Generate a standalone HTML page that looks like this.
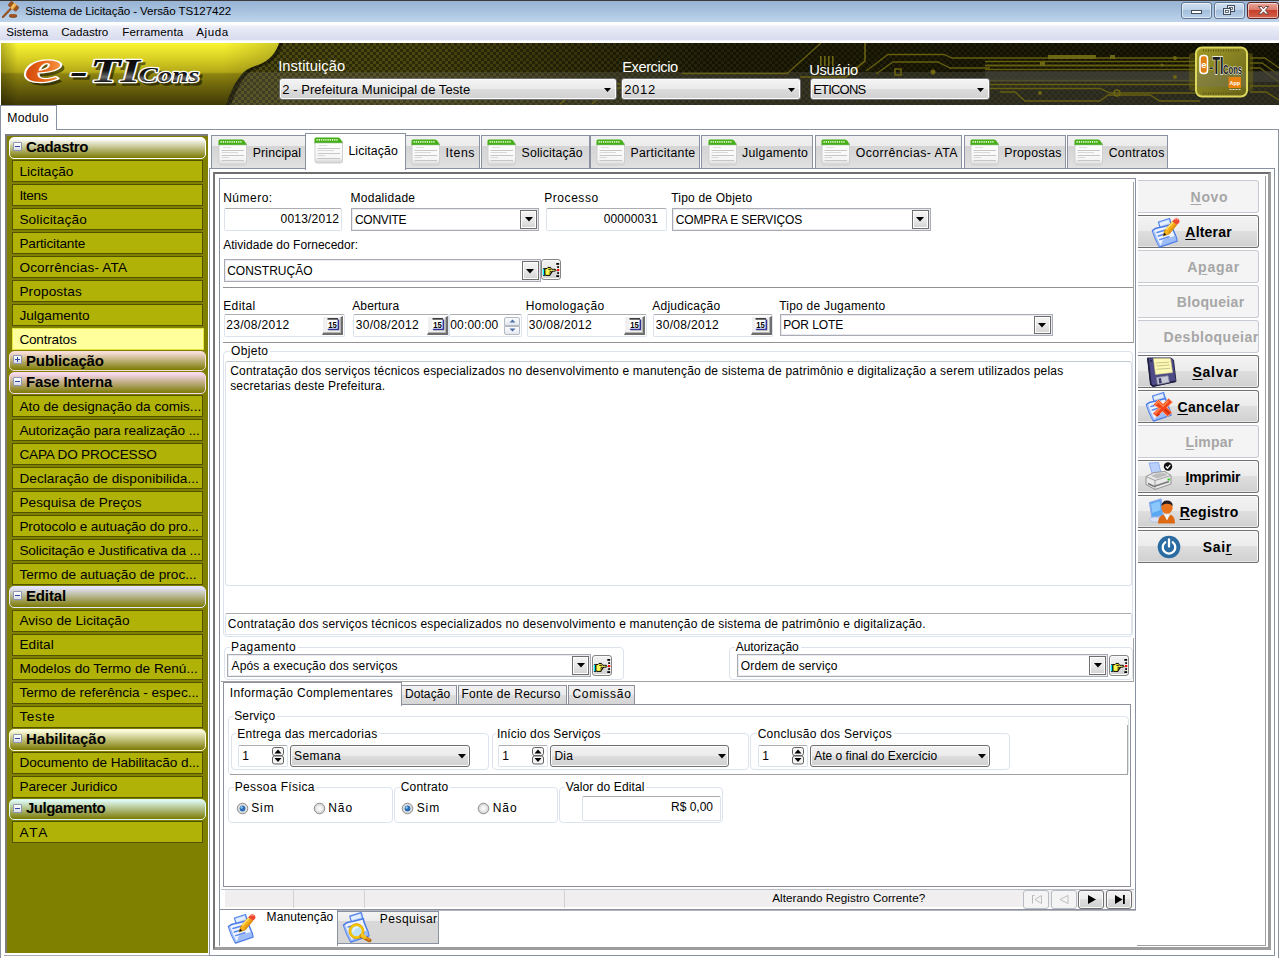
<!DOCTYPE html>
<html lang="pt-BR"><head><meta charset="utf-8"><title>Sistema de Licitação - Versão TS127422</title>
<style>
html,body{margin:0;padding:0;background:#fff;}
body{width:1279px;height:958px;position:relative;overflow:hidden;font-family:"Liberation Sans",sans-serif;}
u{text-decoration:underline;text-underline-offset:1.5px;text-decoration-thickness:1px;}
</style></head><body>
<div style="position:absolute;left:0px;top:0px;width:1279px;height:22px;background:linear-gradient(#98b3d4 0,#a6c0de 45%,#b4cce6 75%,#bdd3ea 100%);border-top:1px solid #3a3a3a;box-sizing:border-box;"></div>
<svg style="position:absolute;left:0px;top:0px" width="22" height="22" viewBox="0 0 22 22">
<path d="M2.900 17 L11.200 8.300" stroke="#8a4a1c" stroke-width="2.100" stroke-linecap="round"/>
<path d="M3.200 16.300 L10.800 8.400" stroke="#b06a30" stroke-width=".7" stroke-linecap="round"/>
<g transform="translate(13.500,6.300) rotate(39)"><rect x="-5.300" y="-2.900" width="10.600" height="5.800" rx="1.400" fill="#874618"/><rect x="-5" y="-2.600" width="2.600" height="5.200" rx="1" fill="#9a5522"/><rect x="2.400" y="-2.600" width="2.600" height="5.200" rx="1" fill="#9a5522"/><rect x="-1.900" y="-3.100" width="3.800" height="6.200" fill="#e9a13c"/><rect x="-1.200" y="-3.100" width="1.600" height="6.200" fill="#f8c56a"/></g>
<ellipse cx="13.100" cy="16" rx="4.100" ry="1.800" fill="#7c3f14"/>
<ellipse cx="13.100" cy="15.400" rx="3.800" ry="1.300" fill="#a25722"/>
</svg>
<span style="position:absolute;left:25.20px;top:4px;line-height:14px;font:normal normal 11.6px/14px 'Liberation Sans',sans-serif;color:#000;white-space:nowrap;letter-spacing:-0.105px;">Sistema de Licitação - Versão TS127422</span>
<div style="position:absolute;left:1181px;top:2px;width:31px;height:17px;background:linear-gradient(#cfe0f2 0,#bcd1e8 45%,#a3bedb 50%,#b9d0e8 100%);border:1px solid #5f7693;border-radius:3px;box-sizing:border-box;box-shadow:inset 0 0 0 1px rgba(255,255,255,.55);"></div>
<div style="position:absolute;left:1214px;top:2px;width:31px;height:17px;background:linear-gradient(#cfe0f2 0,#bcd1e8 45%,#a3bedb 50%,#b9d0e8 100%);border:1px solid #5f7693;border-radius:3px;box-sizing:border-box;box-shadow:inset 0 0 0 1px rgba(255,255,255,.55);"></div>
<div style="position:absolute;left:1247px;top:2px;width:32px;height:17px;background:linear-gradient(#e8a89c 0,#d9796a 45%,#c6402c 50%,#d2604a 100%);border:1px solid #5c2420;border-radius:3px;box-sizing:border-box;box-shadow:inset 0 0 0 1px rgba(255,255,255,.55);"></div>
<svg style="position:absolute;left:1181px;top:2px" width="98" height="17" viewBox="0 0 98 17">
<rect x="10.5" y="8.5" width="10" height="3" fill="#fff" stroke="#444c5a" stroke-width="1"/>
<rect x="46.5" y="3.5" width="7" height="6" fill="#e8eef6" stroke="#444c5a"/><rect x="48.5" y="5.5" width="3" height="2" fill="#fff" stroke="#444c5a" stroke-width=".8"/>
<rect x="42.5" y="6.5" width="7" height="6" fill="#e8eef6" stroke="#444c5a"/><rect x="44.5" y="8.5" width="3" height="2" fill="#fff" stroke="#444c5a" stroke-width=".8"/>
<path d="M77.5 4.5 L80.5 4.5 L82.5 6.8 L84.5 4.5 L87.5 4.5 L84.3 8.3 L87.5 12 L84.5 12 L82.5 9.8 L80.5 12 L77.5 12 L80.7 8.3 Z" fill="#fff" stroke="#5a3a3a" stroke-width=".9"/>
</svg>
<div style="position:absolute;left:0px;top:22px;width:1279px;height:21px;background:linear-gradient(#fff 0,#fff 10%,#eceef8 22%,#e3e6f4 45%,#d8dcee 84%,#fff 90%,#fff 100%);"></div>
<span style="position:absolute;left:6.20px;top:25px;line-height:14px;font:normal normal 11.6px/14px 'Liberation Sans',sans-serif;color:#000;white-space:nowrap;letter-spacing:0.018px;">Sistema</span>
<span style="position:absolute;left:61.20px;top:25px;line-height:14px;font:normal normal 11.6px/14px 'Liberation Sans',sans-serif;color:#000;white-space:nowrap;">Cadastro</span>
<span style="position:absolute;left:122.20px;top:25px;line-height:14px;font:normal normal 11.6px/14px 'Liberation Sans',sans-serif;color:#000;white-space:nowrap;letter-spacing:0.120px;">Ferramenta</span>
<span style="position:absolute;left:196.20px;top:25px;line-height:14px;font:normal normal 11.6px/14px 'Liberation Sans',sans-serif;color:#000;white-space:nowrap;letter-spacing:0.586px;">Ajuda</span>
<svg style="position:absolute;left:1px;top:43px" width="1278" height="62" viewBox="1 43 1278 62">
<defs>
<pattern id="chk" x="1" y="43" width="6" height="6" patternUnits="userSpaceOnUse"><rect width="6" height="6" fill="#2f2c08"/><rect width="3" height="3" fill="#4e4a12"/><rect x="3" y="3" width="3" height="3" fill="#4e4a12"/></pattern>
<linearGradient id="dk" x1="0" x2="1" y1="0" y2="0"><stop offset="0" stop-color="#000" stop-opacity="0"/><stop offset=".33" stop-color="#000" stop-opacity=".05"/><stop offset=".55" stop-color="#000" stop-opacity=".55"/><stop offset="1" stop-color="#000" stop-opacity=".68"/></linearGradient>
<linearGradient id="yl" x1="0" x2="0" y1="0" y2="1"><stop offset="0" stop-color="#fbf532"/><stop offset=".25" stop-color="#d9d024"/><stop offset=".47" stop-color="#b3a918"/><stop offset=".5" stop-color="#8e8410"/><stop offset=".75" stop-color="#655d0a"/><stop offset="1" stop-color="#3f3906"/></linearGradient>
<linearGradient id="ylx" x1="0" x2="1" y1="0" y2="0"><stop offset="0" stop-color="#000" stop-opacity=".25"/><stop offset=".06" stop-color="#000" stop-opacity="0"/><stop offset=".8" stop-color="#000" stop-opacity="0"/><stop offset="1" stop-color="#000" stop-opacity=".18"/></linearGradient>
<linearGradient id="chip" x1="0" x2="1" y1="0" y2="1"><stop offset="0" stop-color="#a09a28"/><stop offset="1" stop-color="#68641a"/></linearGradient>
</defs>
<rect x="1" y="43" width="1278" height="62" fill="url(#chk)"/>
<rect x="1" y="43" width="1278" height="62" fill="url(#dk)"/>
<rect x="1" y="72" width="1278" height="33" fill="#8a8a8a" opacity=".2"/>
<g stroke="#6d6612" fill="none" stroke-width="1.3" opacity=".9"><path d="M560 104 L585 84 L720 84"/><path d="M592 104 L612 88 L760 88"/><path d="M682 73.5 L787 73.5 L821 43"/><path d="M800 77 L846 77 L865 61 L865 43" stroke-width="1.7"/><path d="M866 71 L888 54.5 L944 54.5 L952 58 L1190 58"/><path d="M876 74 L893 62 L938 62 L950 68 L990 68"/><path d="M985 61.5 L1195 61.5"/><path d="M985 65.5 L1195 65.5" stroke-width="1.8"/><path d="M985 69.5 L1195 69.5"/><path d="M985 80.5 L1195 80.5"/><path d="M985 84.5 L1195 84.5" stroke-width="1.6"/><path d="M985 88.5 L1100 88.5 L1110 93 L1195 93"/><path d="M1000 92 L1015 92 L1025 101 L1100 101 L1108 95 L1150 95 L1160 101 L1200 101"/><path d="M1250 58 L1265 58 L1279 68"/><path d="M1250 63 L1262 63 L1279 75"/><path d="M1250 68 L1260 68 L1279 82"/><path d="M1250 86 L1279 86"/><path d="M1250 92 L1266 92 L1279 100"/></g>
<rect x="985" y="71" width="294" height="11" fill="#45453c" opacity=".6"/>
<g fill="#6d6612"><rect x="1048" y="55" width="48" height="4"/><rect x="1110" y="55" width="5" height="4"/><rect x="1040" y="62" width="5" height="4"/><rect x="820" y="56" width="1.600" height="10"/><rect x="824" y="56" width="1.600" height="10"/><rect x="828" y="56" width="1.600" height="10"/><rect x="832" y="56" width="1.600" height="10"/><circle cx="1040" cy="93" r="2"/><circle cx="1175" cy="58" r="2"/><circle cx="1162" cy="65" r="1.6"/><circle cx="1175" cy="77" r="2"/><circle cx="933" cy="72" r="2.5"/><rect x="895" y="69" width="6" height="6" fill="none" stroke="#6d6612" stroke-width="1.5"/></g>
<circle cx="1117" cy="93" r="3" fill="none" stroke="#6d6612" stroke-width="1.4"/>
<path d="M1 43 L283 43 C281 51 276 58 270 62 C262 67 255 68 249 73 C241 80 236 91 231 105 L1 105 Z" fill="#000" opacity=".45"/>
<path d="M1 43 L279 43 C277 50 272 57 266 61 C259 66 251 66 245 71 C237 78 231 90 226 105 L1 105 Z" fill="url(#yl)"/>
<path d="M1 43 L279 43 C277 50 272 57 266 61 C259 66 251 66 245 71 C237 78 231 90 226 105 L1 105 Z" fill="url(#ylx)"/>
<rect x="1189" y="53" width="64" height="38" rx="3" fill="#6b650f" opacity=".5"/>
<rect x="1196" y="47.5" width="51" height="49" rx="6" fill="url(#chip)" stroke="#dcd85c" stroke-width="2"/>
<rect x="1197" y="72" width="49" height="15" fill="#77776a" opacity=".35"/>
<path d="M1203 50.500 H1240 M1203 93.500 H1240" stroke="#5d5812" stroke-width="2" stroke-dasharray="1 1.500"/>
<rect x="1200" y="55.500" width="7.500" height="18" rx="3" fill="#e07f12" stroke="#fff" stroke-width="1.500"/>
<text x="1201.200" y="68" font-family="Liberation Sans,sans-serif" font-weight="bold" font-size="9.500" fill="#fff">e</text>
<text x="1209" y="72" font-family="Liberation Sans,sans-serif" font-weight="bold" font-size="13" fill="#222" stroke="#fff" stroke-width=".6" paint-order="stroke">-</text>
<text x="1212.500" y="73.500" font-family="Liberation Sans,sans-serif" font-weight="bold" font-size="23" fill="#1d1d1d" stroke="#fff" stroke-width="1.300" paint-order="stroke" textLength="11" lengthAdjust="spacingAndGlyphs">TI</text>
<text x="1223" y="73.500" font-family="Liberation Sans,sans-serif" font-weight="bold" font-size="13" fill="#1d1d1d" stroke="#fff" stroke-width="1" paint-order="stroke" textLength="19" lengthAdjust="spacingAndGlyphs">Cons</text>
<rect x="1228.500" y="77" width="12.500" height="11" fill="#e8820e"/>
<text x="1229.500" y="85" font-family="Liberation Sans,sans-serif" font-weight="bold" font-size="5.500" fill="#fff">App</text>
<path d="M1229.500 89.500 H1241" stroke="#fff" stroke-width=".8" stroke-dasharray="2 1"/>
<defs><linearGradient id="lgm" x1="0" x2="0" y1="0" y2="1"><stop offset="0" stop-color="#000"/><stop offset=".5" stop-color="#161616"/><stop offset=".68" stop-color="#6e6e6e"/><stop offset=".8" stop-color="#1c1c1c"/><stop offset="1" stop-color="#000"/></linearGradient>
<linearGradient id="lge" x1="0" x2="1" y1="0" y2="0"><stop offset="0" stop-color="#cf4408"/><stop offset=".55" stop-color="#ea6a1c"/><stop offset="1" stop-color="#f79a48"/></linearGradient></defs>
<g font-family="Liberation Serif,serif" font-style="italic" font-weight="bold">
<g transform="translate(3,3)" fill="#000" opacity=".5" stroke="#000" stroke-width="1.500">
<text x="24" y="82" font-size="47" textLength="38" lengthAdjust="spacingAndGlyphs">e</text>
<text x="70" y="83" font-size="34" textLength="18" lengthAdjust="spacingAndGlyphs">-</text>
<text x="90" y="82" font-size="34" textLength="50" lengthAdjust="spacingAndGlyphs">TI</text>
<text x="138.500" y="81.500" font-size="21.500" textLength="61" lengthAdjust="spacingAndGlyphs">Cons</text></g>
<g stroke="#fff" stroke-width="2.400" stroke-linejoin="round" fill="#fff">
<text x="24" y="82" font-size="47" textLength="38" lengthAdjust="spacingAndGlyphs">e</text>
<text x="70" y="83" font-size="34" textLength="18" lengthAdjust="spacingAndGlyphs">-</text>
<text x="90" y="82" font-size="34" textLength="50" lengthAdjust="spacingAndGlyphs">TI</text>
<text x="138.500" y="81.500" font-size="21.500" textLength="61" lengthAdjust="spacingAndGlyphs">Cons</text></g>
<text x="24" y="82" font-size="47" fill="url(#lge)" textLength="38" lengthAdjust="spacingAndGlyphs">e</text>
<text x="70" y="83" font-size="34" fill="#111" textLength="18" lengthAdjust="spacingAndGlyphs">-</text>
<text x="90" y="82" font-size="34" fill="url(#lgm)" textLength="50" lengthAdjust="spacingAndGlyphs">TI</text>
<text x="138.500" y="81.500" font-size="21.500" fill="url(#lgm)" textLength="61" lengthAdjust="spacingAndGlyphs">Cons</text>
</g>
</svg>
<span style="position:absolute;left:278.20px;top:57px;line-height:18px;font:normal normal 14.7px/18px 'Liberation Sans',sans-serif;color:#fff;white-space:nowrap;letter-spacing:0.086px;">Instituição</span>
<span style="position:absolute;left:622.20px;top:58px;line-height:18px;font:normal normal 14.7px/18px 'Liberation Sans',sans-serif;color:#fff;white-space:nowrap;letter-spacing:-0.449px;">Exercicio</span>
<span style="position:absolute;left:809.20px;top:61px;line-height:18px;font:normal normal 14.7px/18px 'Liberation Sans',sans-serif;color:#fff;white-space:nowrap;letter-spacing:-0.271px;">Usuário</span>
<div style="position:absolute;left:279px;top:78px;width:338px;height:22px;background:linear-gradient(#f4f4f4 0,#eaeaea 48%,#dcdcdc 52%,#d0d0d0 100%);border:1px solid #707070;border-radius:3px;box-sizing:border-box;box-shadow:inset 0 0 0 1px #fcfcfc;"></div><span style="position:absolute;left:282.20px;top:81px;line-height:17px;font:normal normal 13px/17px 'Liberation Sans',sans-serif;color:#000;white-space:nowrap;letter-spacing:0.056px;">2 - Prefeitura Municipal de Teste</span><svg style="position:absolute;left:604px;top:88px" width="8" height="5"><path d="M0 0 L7 0 L3.5 4 Z" fill="#000"/></svg>
<div style="position:absolute;left:621px;top:78px;width:180px;height:22px;background:linear-gradient(#f4f4f4 0,#eaeaea 48%,#dcdcdc 52%,#d0d0d0 100%);border:1px solid #707070;border-radius:3px;box-sizing:border-box;box-shadow:inset 0 0 0 1px #fcfcfc;"></div><span style="position:absolute;left:624.20px;top:81px;line-height:17px;font:normal normal 13px/17px 'Liberation Sans',sans-serif;color:#000;white-space:nowrap;letter-spacing:0.693px;">2012</span><svg style="position:absolute;left:788px;top:88px" width="8" height="5"><path d="M0 0 L7 0 L3.5 4 Z" fill="#000"/></svg>
<div style="position:absolute;left:810px;top:78px;width:180px;height:22px;background:linear-gradient(#f4f4f4 0,#eaeaea 48%,#dcdcdc 52%,#d0d0d0 100%);border:1px solid #707070;border-radius:3px;box-sizing:border-box;box-shadow:inset 0 0 0 1px #fcfcfc;"></div><span style="position:absolute;left:813.20px;top:81px;line-height:17px;font:normal normal 13px/17px 'Liberation Sans',sans-serif;color:#000;white-space:nowrap;letter-spacing:-0.799px;">ETICONS</span><svg style="position:absolute;left:977px;top:88px" width="8" height="5"><path d="M0 0 L7 0 L3.5 4 Z" fill="#000"/></svg>
<div style="position:absolute;left:0px;top:129px;width:1278.5px;height:840px;border:1px solid #8a91a0;box-sizing:border-box;background:#fff;"></div>
<div style="position:absolute;left:4px;top:955px;width:1205px;height:1px;background:#a9a9ae;"></div>
<div style="position:absolute;left:0px;top:105px;width:57px;height:25px;border:1px solid #8a91a0;border-bottom:none;box-sizing:border-box;background:#fff;"></div>
<span style="position:absolute;left:7.20px;top:110px;line-height:16px;font:normal normal 12.3px/16px 'Liberation Sans',sans-serif;color:#000;white-space:nowrap;letter-spacing:0.231px;">Modulo</span>
<div style="position:absolute;left:5px;top:134px;width:203px;height:819px;background:#808000;border:2px solid #7d7d7d;border-right:none;border-bottom:none;box-sizing:border-box;"></div>
<div style="position:absolute;left:9px;top:137px;width:197px;height:22px;box-sizing:border-box;border:1px solid #fff;border-radius:5px;background:linear-gradient(#fff 0,#fff 4%,#7c7a02 100%);"></div><div style="position:absolute;left:13px;top:142px;width:9px;height:9px;box-sizing:border-box;border:1px solid #8c97b4;border-radius:1px;background:linear-gradient(#fff,#dcdce4);"></div><div style="position:absolute;left:15px;top:146px;width:5px;height:1px;background:#3048a8;"></div><span style="position:absolute;left:26.00px;top:137px;line-height:19px;font:normal bold 15px/19px 'Liberation Sans',sans-serif;color:#000;white-space:nowrap;letter-spacing:-0.362px;">Cadastro</span>
<div style="position:absolute;left:12px;top:160px;width:191px;height:22px;box-sizing:border-box;background:#b0b208;border:1px solid #525200;"></div><span style="position:absolute;left:19.40px;top:163px;line-height:17px;font:normal normal 13.6px/17px 'Liberation Sans',sans-serif;color:#000;white-space:nowrap;letter-spacing:0.043px;">Licitação</span>
<div style="position:absolute;left:12px;top:184px;width:191px;height:22px;box-sizing:border-box;background:#b0b208;border:1px solid #525200;"></div><span style="position:absolute;left:19.40px;top:187px;line-height:17px;font:normal normal 13.6px/17px 'Liberation Sans',sans-serif;color:#000;white-space:nowrap;letter-spacing:-0.321px;">Itens</span>
<div style="position:absolute;left:12px;top:208px;width:191px;height:22px;box-sizing:border-box;background:#b0b208;border:1px solid #525200;"></div><span style="position:absolute;left:19.40px;top:211px;line-height:17px;font:normal normal 13.6px/17px 'Liberation Sans',sans-serif;color:#000;white-space:nowrap;letter-spacing:0.165px;">Solicitação</span>
<div style="position:absolute;left:12px;top:232px;width:191px;height:22px;box-sizing:border-box;background:#b0b208;border:1px solid #525200;"></div><span style="position:absolute;left:19.40px;top:235px;line-height:17px;font:normal normal 13.6px/17px 'Liberation Sans',sans-serif;color:#000;white-space:nowrap;letter-spacing:-0.183px;">Particitante</span>
<div style="position:absolute;left:12px;top:256px;width:191px;height:22px;box-sizing:border-box;background:#b0b208;border:1px solid #525200;"></div><span style="position:absolute;left:19.40px;top:259px;line-height:17px;font:normal normal 13.6px/17px 'Liberation Sans',sans-serif;color:#000;white-space:nowrap;letter-spacing:0.162px;">Ocorrências- ATA</span>
<div style="position:absolute;left:12px;top:280px;width:191px;height:22px;box-sizing:border-box;background:#b0b208;border:1px solid #525200;"></div><span style="position:absolute;left:19.40px;top:283px;line-height:17px;font:normal normal 13.6px/17px 'Liberation Sans',sans-serif;color:#000;white-space:nowrap;letter-spacing:0.135px;">Propostas</span>
<div style="position:absolute;left:12px;top:304px;width:191px;height:22px;box-sizing:border-box;background:#b0b208;border:1px solid #525200;"></div><span style="position:absolute;left:19.40px;top:307px;line-height:17px;font:normal normal 13.6px/17px 'Liberation Sans',sans-serif;color:#000;white-space:nowrap;">Julgamento</span>
<div style="position:absolute;left:12px;top:328px;width:192px;height:22px;box-sizing:border-box;background:#ffff9c;border:1px solid #e6e640;"></div><span style="position:absolute;left:19.40px;top:331px;line-height:17px;font:normal normal 13.6px/17px 'Liberation Sans',sans-serif;color:#000;white-space:nowrap;letter-spacing:-0.205px;">Contratos</span>
<div style="position:absolute;left:9px;top:351px;width:197px;height:20px;box-sizing:border-box;border:1px solid #f6ddd6;border-radius:5px;background:linear-gradient(#f6ddd6 0,#f6ddd6 4%,#7c7a02 100%);"></div><div style="position:absolute;left:13px;top:355px;width:9px;height:9px;box-sizing:border-box;border:1px solid #8c97b4;border-radius:1px;background:linear-gradient(#fff,#dcdce4);"></div><div style="position:absolute;left:15px;top:359px;width:5px;height:1px;background:#3048a8;"></div><div style="position:absolute;left:17px;top:357px;width:1px;height:5px;background:#3048a8;"></div><span style="position:absolute;left:26.00px;top:351px;line-height:19px;font:normal bold 15px/19px 'Liberation Sans',sans-serif;color:#000;white-space:nowrap;letter-spacing:-0.134px;">Publicação</span>
<div style="position:absolute;left:9px;top:372px;width:197px;height:22px;box-sizing:border-box;border:1px solid #f8d8ee;border-radius:5px;background:linear-gradient(#f8d8ee 0,#f8d8ee 4%,#7c7a02 100%);"></div><div style="position:absolute;left:13px;top:377px;width:9px;height:9px;box-sizing:border-box;border:1px solid #8c97b4;border-radius:1px;background:linear-gradient(#fff,#dcdce4);"></div><div style="position:absolute;left:15px;top:381px;width:5px;height:1px;background:#3048a8;"></div><span style="position:absolute;left:26.00px;top:372px;line-height:19px;font:normal bold 15px/19px 'Liberation Sans',sans-serif;color:#000;white-space:nowrap;letter-spacing:-0.189px;">Fase Interna</span>
<div style="position:absolute;left:12px;top:395.2px;width:191px;height:22px;box-sizing:border-box;background:#b0b208;border:1px solid #525200;"></div><span style="position:absolute;left:19.40px;top:398px;line-height:17px;font:normal normal 13.6px/17px 'Liberation Sans',sans-serif;color:#000;white-space:nowrap;letter-spacing:-0.012px;">Ato de designação da comis...</span>
<div style="position:absolute;left:12px;top:419.2px;width:191px;height:22px;box-sizing:border-box;background:#b0b208;border:1px solid #525200;"></div><span style="position:absolute;left:19.40px;top:422px;line-height:17px;font:normal normal 13.6px/17px 'Liberation Sans',sans-serif;color:#000;white-space:nowrap;letter-spacing:-0.107px;">Autorização para realização ...</span>
<div style="position:absolute;left:12px;top:443.2px;width:191px;height:22px;box-sizing:border-box;background:#b0b208;border:1px solid #525200;"></div><span style="position:absolute;left:19.40px;top:446px;line-height:17px;font:normal normal 13.6px/17px 'Liberation Sans',sans-serif;color:#000;white-space:nowrap;letter-spacing:-0.184px;">CAPA DO PROCESSO</span>
<div style="position:absolute;left:12px;top:467.2px;width:191px;height:22px;box-sizing:border-box;background:#b0b208;border:1px solid #525200;"></div><span style="position:absolute;left:19.40px;top:470px;line-height:17px;font:normal normal 13.6px/17px 'Liberation Sans',sans-serif;color:#000;white-space:nowrap;letter-spacing:0.066px;">Declaração de disponibilida...</span>
<div style="position:absolute;left:12px;top:491.2px;width:191px;height:22px;box-sizing:border-box;background:#b0b208;border:1px solid #525200;"></div><span style="position:absolute;left:19.40px;top:494px;line-height:17px;font:normal normal 13.6px/17px 'Liberation Sans',sans-serif;color:#000;white-space:nowrap;letter-spacing:0.070px;">Pesquisa de Preços</span>
<div style="position:absolute;left:12px;top:515.2px;width:191px;height:22px;box-sizing:border-box;background:#b0b208;border:1px solid #525200;"></div><span style="position:absolute;left:19.40px;top:518px;line-height:17px;font:normal normal 13.6px/17px 'Liberation Sans',sans-serif;color:#000;white-space:nowrap;letter-spacing:-0.091px;">Protocolo e autuação do pro...</span>
<div style="position:absolute;left:12px;top:539.2px;width:191px;height:22px;box-sizing:border-box;background:#b0b208;border:1px solid #525200;"></div><span style="position:absolute;left:19.40px;top:542px;line-height:17px;font:normal normal 13.6px/17px 'Liberation Sans',sans-serif;color:#000;white-space:nowrap;letter-spacing:-0.116px;">Solicitação e Justificativa da ...</span>
<div style="position:absolute;left:12px;top:563.2px;width:191px;height:22px;box-sizing:border-box;background:#b0b208;border:1px solid #525200;"></div><span style="position:absolute;left:19.40px;top:566px;line-height:17px;font:normal normal 13.6px/17px 'Liberation Sans',sans-serif;color:#000;white-space:nowrap;letter-spacing:0.014px;">Termo de autuação de proc...</span>
<div style="position:absolute;left:9px;top:586px;width:197px;height:22px;box-sizing:border-box;border:1px solid #e4e4fa;border-radius:5px;background:linear-gradient(#e4e4fa 0,#e4e4fa 4%,#7c7a02 100%);"></div><div style="position:absolute;left:13px;top:591px;width:9px;height:9px;box-sizing:border-box;border:1px solid #8c97b4;border-radius:1px;background:linear-gradient(#fff,#dcdce4);"></div><div style="position:absolute;left:15px;top:595px;width:5px;height:1px;background:#3048a8;"></div><span style="position:absolute;left:26.00px;top:586px;line-height:19px;font:normal bold 15px/19px 'Liberation Sans',sans-serif;color:#000;white-space:nowrap;letter-spacing:-0.149px;">Edital</span>
<div style="position:absolute;left:12px;top:609.7px;width:191px;height:22px;box-sizing:border-box;background:#b0b208;border:1px solid #525200;"></div><span style="position:absolute;left:19.40px;top:612px;line-height:17px;font:normal normal 13.6px/17px 'Liberation Sans',sans-serif;color:#000;white-space:nowrap;letter-spacing:0.045px;">Aviso de Licitação</span>
<div style="position:absolute;left:12px;top:633.7px;width:191px;height:22px;box-sizing:border-box;background:#b0b208;border:1px solid #525200;"></div><span style="position:absolute;left:19.40px;top:636px;line-height:17px;font:normal normal 13.6px/17px 'Liberation Sans',sans-serif;color:#000;white-space:nowrap;letter-spacing:0.057px;">Edital</span>
<div style="position:absolute;left:12px;top:657.7px;width:191px;height:22px;box-sizing:border-box;background:#b0b208;border:1px solid #525200;"></div><span style="position:absolute;left:19.40px;top:660px;line-height:17px;font:normal normal 13.6px/17px 'Liberation Sans',sans-serif;color:#000;white-space:nowrap;letter-spacing:0.012px;">Modelos do Termo de Renú...</span>
<div style="position:absolute;left:12px;top:681.7px;width:191px;height:22px;box-sizing:border-box;background:#b0b208;border:1px solid #525200;"></div><span style="position:absolute;left:19.40px;top:684px;line-height:17px;font:normal normal 13.6px/17px 'Liberation Sans',sans-serif;color:#000;white-space:nowrap;letter-spacing:-0.037px;">Termo de referência - espec...</span>
<div style="position:absolute;left:12px;top:705.7px;width:191px;height:22px;box-sizing:border-box;background:#b0b208;border:1px solid #525200;"></div><span style="position:absolute;left:19.40px;top:708px;line-height:17px;font:normal normal 13.6px/17px 'Liberation Sans',sans-serif;color:#000;white-space:nowrap;letter-spacing:0.675px;">Teste</span>
<div style="position:absolute;left:9px;top:729px;width:197px;height:22px;box-sizing:border-box;border:1px solid #fbfbdc;border-radius:5px;background:linear-gradient(#fbfbdc 0,#fbfbdc 4%,#7c7a02 100%);"></div><div style="position:absolute;left:13px;top:734px;width:9px;height:9px;box-sizing:border-box;border:1px solid #8c97b4;border-radius:1px;background:linear-gradient(#fff,#dcdce4);"></div><div style="position:absolute;left:15px;top:738px;width:5px;height:1px;background:#3048a8;"></div><span style="position:absolute;left:26.00px;top:729px;line-height:19px;font:normal bold 15px/19px 'Liberation Sans',sans-serif;color:#000;white-space:nowrap;letter-spacing:-0.023px;">Habilitação</span>
<div style="position:absolute;left:12px;top:751.8px;width:191px;height:22px;box-sizing:border-box;background:#b0b208;border:1px solid #525200;"></div><span style="position:absolute;left:19.40px;top:754px;line-height:17px;font:normal normal 13.6px/17px 'Liberation Sans',sans-serif;color:#000;white-space:nowrap;letter-spacing:-0.068px;">Documento de Habilitacão d...</span>
<div style="position:absolute;left:12px;top:775.8px;width:191px;height:22px;box-sizing:border-box;background:#b0b208;border:1px solid #525200;"></div><span style="position:absolute;left:19.40px;top:778px;line-height:17px;font:normal normal 13.6px/17px 'Liberation Sans',sans-serif;color:#000;white-space:nowrap;letter-spacing:-0.015px;">Parecer Juridico</span>
<div style="position:absolute;left:9px;top:798.5px;width:197px;height:21.5px;box-sizing:border-box;border:1px solid #dcf8f0;border-radius:5px;background:linear-gradient(#dcf8f0 0,#dcf8f0 4%,#7c7a02 100%);"></div><div style="position:absolute;left:13px;top:803.5px;width:9px;height:9px;box-sizing:border-box;border:1px solid #8c97b4;border-radius:1px;background:linear-gradient(#fff,#dcdce4);"></div><div style="position:absolute;left:15px;top:807.5px;width:5px;height:1px;background:#3048a8;"></div><span style="position:absolute;left:26.00px;top:798px;line-height:19px;font:normal bold 15px/19px 'Liberation Sans',sans-serif;color:#000;white-space:nowrap;letter-spacing:-0.499px;">Julgamento</span>
<div style="position:absolute;left:12px;top:821.2px;width:191px;height:22px;box-sizing:border-box;background:#b0b208;border:1px solid #525200;"></div><span style="position:absolute;left:19.40px;top:824px;line-height:17px;font:normal normal 13.6px/17px 'Liberation Sans',sans-serif;color:#000;white-space:nowrap;letter-spacing:1.789px;">ATA</span>
<div style="position:absolute;left:209px;top:168px;width:1065.5px;height:787.5px;border:1px solid #8a91a0;box-sizing:border-box;background:#fff;"></div>
<div style="position:absolute;left:211px;top:135px;width:94.5px;height:33px;box-sizing:border-box;border:1px solid #8a91a0;border-bottom:none;background:linear-gradient(#f1f1f1 0,#ececec 30%,#d5d5d5 32%,#dadada 70%,#e2e2e2 100%);"></div>
<svg style="position:absolute;left:218px;top:138.5px" width="30" height="27" viewBox="0 0 30 27">
<defs><linearGradient id="pg218" x1="0" x2="0" y1="0" y2="1"><stop offset="0" stop-color="#fff"/><stop offset=".75" stop-color="#f6f6f6"/><stop offset="1" stop-color="#d2d2d2"/></linearGradient></defs>
<path d="M1 4 L28.500 4 L28.500 24 Q28.500 26 26.500 26 L3 26 Q1 26 1 24 Z" fill="url(#pg218)" stroke="#cfcfcf" stroke-width="1"/>
<path d="M0.500 2 Q0.500 0.500 2 0.500 L24 0.500 Q25.500 0.500 26.500 2 L28.500 5.500 L0.500 5.500 Z" fill="#44b016"/>
<path d="M2.500 2.800 H24" stroke="#dff6cc" stroke-width="1.800" stroke-dasharray="1.300 .9"/>
<path d="M0.500 5.700 H28.500" stroke="#2f8f0a" stroke-width=".7"/>
<g stroke="#c6c6c6" stroke-width="1"><path d="M5 8.500 H13" stroke="#dedede"/><path d="M3.500 11.500 H26"/><path d="M3.500 13.500 H20" stroke="#d8d8d8"/><path d="M3.500 16.500 H26"/><path d="M3.500 18.500 H11" stroke="#d8d8d8"/><path d="M3.500 21.500 H26"/></g>
</svg>
<span style="position:absolute;left:252.70px;top:145px;line-height:16px;font:normal normal 12.3px/16px 'Liberation Sans',sans-serif;color:#000;white-space:nowrap;letter-spacing:0.154px;">Principal</span>
<div style="position:absolute;left:405px;top:135px;width:74.5px;height:33px;box-sizing:border-box;border:1px solid #8a91a0;border-bottom:none;background:linear-gradient(#f1f1f1 0,#ececec 30%,#d5d5d5 32%,#dadada 70%,#e2e2e2 100%);"></div>
<svg style="position:absolute;left:411px;top:138.5px" width="30" height="27" viewBox="0 0 30 27">
<defs><linearGradient id="pg411" x1="0" x2="0" y1="0" y2="1"><stop offset="0" stop-color="#fff"/><stop offset=".75" stop-color="#f6f6f6"/><stop offset="1" stop-color="#d2d2d2"/></linearGradient></defs>
<path d="M1 4 L28.500 4 L28.500 24 Q28.500 26 26.500 26 L3 26 Q1 26 1 24 Z" fill="url(#pg411)" stroke="#cfcfcf" stroke-width="1"/>
<path d="M0.500 2 Q0.500 0.500 2 0.500 L24 0.500 Q25.500 0.500 26.500 2 L28.500 5.500 L0.500 5.500 Z" fill="#44b016"/>
<path d="M2.500 2.800 H24" stroke="#dff6cc" stroke-width="1.800" stroke-dasharray="1.300 .9"/>
<path d="M0.500 5.700 H28.500" stroke="#2f8f0a" stroke-width=".7"/>
<g stroke="#c6c6c6" stroke-width="1"><path d="M5 8.500 H13" stroke="#dedede"/><path d="M3.500 11.500 H26"/><path d="M3.500 13.500 H20" stroke="#d8d8d8"/><path d="M3.500 16.500 H26"/><path d="M3.500 18.500 H11" stroke="#d8d8d8"/><path d="M3.500 21.500 H26"/></g>
</svg>
<span style="position:absolute;left:445.60px;top:145px;line-height:16px;font:normal normal 12.3px/16px 'Liberation Sans',sans-serif;color:#000;white-space:nowrap;letter-spacing:0.557px;">Itens</span>
<div style="position:absolute;left:480.5px;top:135px;width:109px;height:33px;box-sizing:border-box;border:1px solid #8a91a0;border-bottom:none;background:linear-gradient(#f1f1f1 0,#ececec 30%,#d5d5d5 32%,#dadada 70%,#e2e2e2 100%);"></div>
<svg style="position:absolute;left:487.4px;top:138.5px" width="30" height="27" viewBox="0 0 30 27">
<defs><linearGradient id="pg487.4" x1="0" x2="0" y1="0" y2="1"><stop offset="0" stop-color="#fff"/><stop offset=".75" stop-color="#f6f6f6"/><stop offset="1" stop-color="#d2d2d2"/></linearGradient></defs>
<path d="M1 4 L28.500 4 L28.500 24 Q28.500 26 26.500 26 L3 26 Q1 26 1 24 Z" fill="url(#pg487.4)" stroke="#cfcfcf" stroke-width="1"/>
<path d="M0.500 2 Q0.500 0.500 2 0.500 L24 0.500 Q25.500 0.500 26.500 2 L28.500 5.500 L0.500 5.500 Z" fill="#44b016"/>
<path d="M2.500 2.800 H24" stroke="#dff6cc" stroke-width="1.800" stroke-dasharray="1.300 .9"/>
<path d="M0.500 5.700 H28.500" stroke="#2f8f0a" stroke-width=".7"/>
<g stroke="#c6c6c6" stroke-width="1"><path d="M5 8.500 H13" stroke="#dedede"/><path d="M3.500 11.500 H26"/><path d="M3.500 13.500 H20" stroke="#d8d8d8"/><path d="M3.500 16.500 H26"/><path d="M3.500 18.500 H11" stroke="#d8d8d8"/><path d="M3.500 21.500 H26"/></g>
</svg>
<span style="position:absolute;left:521.60px;top:145px;line-height:16px;font:normal normal 12.3px/16px 'Liberation Sans',sans-serif;color:#000;white-space:nowrap;letter-spacing:0.163px;">Solicitação</span>
<div style="position:absolute;left:590px;top:135px;width:109.5px;height:33px;box-sizing:border-box;border:1px solid #8a91a0;border-bottom:none;background:linear-gradient(#f1f1f1 0,#ececec 30%,#d5d5d5 32%,#dadada 70%,#e2e2e2 100%);"></div>
<svg style="position:absolute;left:596px;top:138.5px" width="30" height="27" viewBox="0 0 30 27">
<defs><linearGradient id="pg596" x1="0" x2="0" y1="0" y2="1"><stop offset="0" stop-color="#fff"/><stop offset=".75" stop-color="#f6f6f6"/><stop offset="1" stop-color="#d2d2d2"/></linearGradient></defs>
<path d="M1 4 L28.500 4 L28.500 24 Q28.500 26 26.500 26 L3 26 Q1 26 1 24 Z" fill="url(#pg596)" stroke="#cfcfcf" stroke-width="1"/>
<path d="M0.500 2 Q0.500 0.500 2 0.500 L24 0.500 Q25.500 0.500 26.500 2 L28.500 5.500 L0.500 5.500 Z" fill="#44b016"/>
<path d="M2.500 2.800 H24" stroke="#dff6cc" stroke-width="1.800" stroke-dasharray="1.300 .9"/>
<path d="M0.500 5.700 H28.500" stroke="#2f8f0a" stroke-width=".7"/>
<g stroke="#c6c6c6" stroke-width="1"><path d="M5 8.500 H13" stroke="#dedede"/><path d="M3.500 11.500 H26"/><path d="M3.500 13.500 H20" stroke="#d8d8d8"/><path d="M3.500 16.500 H26"/><path d="M3.500 18.500 H11" stroke="#d8d8d8"/><path d="M3.500 21.500 H26"/></g>
</svg>
<span style="position:absolute;left:630.50px;top:145px;line-height:16px;font:normal normal 12.3px/16px 'Liberation Sans',sans-serif;color:#000;white-space:nowrap;letter-spacing:0.289px;">Particitante</span>
<div style="position:absolute;left:701px;top:135px;width:112px;height:33px;box-sizing:border-box;border:1px solid #8a91a0;border-bottom:none;background:linear-gradient(#f1f1f1 0,#ececec 30%,#d5d5d5 32%,#dadada 70%,#e2e2e2 100%);"></div>
<svg style="position:absolute;left:708px;top:138.5px" width="30" height="27" viewBox="0 0 30 27">
<defs><linearGradient id="pg708" x1="0" x2="0" y1="0" y2="1"><stop offset="0" stop-color="#fff"/><stop offset=".75" stop-color="#f6f6f6"/><stop offset="1" stop-color="#d2d2d2"/></linearGradient></defs>
<path d="M1 4 L28.500 4 L28.500 24 Q28.500 26 26.500 26 L3 26 Q1 26 1 24 Z" fill="url(#pg708)" stroke="#cfcfcf" stroke-width="1"/>
<path d="M0.500 2 Q0.500 0.500 2 0.500 L24 0.500 Q25.500 0.500 26.500 2 L28.500 5.500 L0.500 5.500 Z" fill="#44b016"/>
<path d="M2.500 2.800 H24" stroke="#dff6cc" stroke-width="1.800" stroke-dasharray="1.300 .9"/>
<path d="M0.500 5.700 H28.500" stroke="#2f8f0a" stroke-width=".7"/>
<g stroke="#c6c6c6" stroke-width="1"><path d="M5 8.500 H13" stroke="#dedede"/><path d="M3.500 11.500 H26"/><path d="M3.500 13.500 H20" stroke="#d8d8d8"/><path d="M3.500 16.500 H26"/><path d="M3.500 18.500 H11" stroke="#d8d8d8"/><path d="M3.500 21.500 H26"/></g>
</svg>
<span style="position:absolute;left:742.10px;top:145px;line-height:16px;font:normal normal 12.3px/16px 'Liberation Sans',sans-serif;color:#000;white-space:nowrap;letter-spacing:0.247px;">Julgamento</span>
<div style="position:absolute;left:814.5px;top:135px;width:147.5px;height:33px;box-sizing:border-box;border:1px solid #8a91a0;border-bottom:none;background:linear-gradient(#f1f1f1 0,#ececec 30%,#d5d5d5 32%,#dadada 70%,#e2e2e2 100%);"></div>
<svg style="position:absolute;left:821px;top:138.5px" width="30" height="27" viewBox="0 0 30 27">
<defs><linearGradient id="pg821" x1="0" x2="0" y1="0" y2="1"><stop offset="0" stop-color="#fff"/><stop offset=".75" stop-color="#f6f6f6"/><stop offset="1" stop-color="#d2d2d2"/></linearGradient></defs>
<path d="M1 4 L28.500 4 L28.500 24 Q28.500 26 26.500 26 L3 26 Q1 26 1 24 Z" fill="url(#pg821)" stroke="#cfcfcf" stroke-width="1"/>
<path d="M0.500 2 Q0.500 0.500 2 0.500 L24 0.500 Q25.500 0.500 26.500 2 L28.500 5.500 L0.500 5.500 Z" fill="#44b016"/>
<path d="M2.500 2.800 H24" stroke="#dff6cc" stroke-width="1.800" stroke-dasharray="1.300 .9"/>
<path d="M0.500 5.700 H28.500" stroke="#2f8f0a" stroke-width=".7"/>
<g stroke="#c6c6c6" stroke-width="1"><path d="M5 8.500 H13" stroke="#dedede"/><path d="M3.500 11.500 H26"/><path d="M3.500 13.500 H20" stroke="#d8d8d8"/><path d="M3.500 16.500 H26"/><path d="M3.500 18.500 H11" stroke="#d8d8d8"/><path d="M3.500 21.500 H26"/></g>
</svg>
<span style="position:absolute;left:855.70px;top:145px;line-height:16px;font:normal normal 12.3px/16px 'Liberation Sans',sans-serif;color:#000;white-space:nowrap;letter-spacing:0.432px;">Ocorrências- ATA</span>
<div style="position:absolute;left:963.5px;top:135px;width:102.5px;height:33px;box-sizing:border-box;border:1px solid #8a91a0;border-bottom:none;background:linear-gradient(#f1f1f1 0,#ececec 30%,#d5d5d5 32%,#dadada 70%,#e2e2e2 100%);"></div>
<svg style="position:absolute;left:970px;top:138.5px" width="30" height="27" viewBox="0 0 30 27">
<defs><linearGradient id="pg970" x1="0" x2="0" y1="0" y2="1"><stop offset="0" stop-color="#fff"/><stop offset=".75" stop-color="#f6f6f6"/><stop offset="1" stop-color="#d2d2d2"/></linearGradient></defs>
<path d="M1 4 L28.500 4 L28.500 24 Q28.500 26 26.500 26 L3 26 Q1 26 1 24 Z" fill="url(#pg970)" stroke="#cfcfcf" stroke-width="1"/>
<path d="M0.500 2 Q0.500 0.500 2 0.500 L24 0.500 Q25.500 0.500 26.500 2 L28.500 5.500 L0.500 5.500 Z" fill="#44b016"/>
<path d="M2.500 2.800 H24" stroke="#dff6cc" stroke-width="1.800" stroke-dasharray="1.300 .9"/>
<path d="M0.500 5.700 H28.500" stroke="#2f8f0a" stroke-width=".7"/>
<g stroke="#c6c6c6" stroke-width="1"><path d="M5 8.500 H13" stroke="#dedede"/><path d="M3.500 11.500 H26"/><path d="M3.500 13.500 H20" stroke="#d8d8d8"/><path d="M3.500 16.500 H26"/><path d="M3.500 18.500 H11" stroke="#d8d8d8"/><path d="M3.500 21.500 H26"/></g>
</svg>
<span style="position:absolute;left:1004.20px;top:145px;line-height:16px;font:normal normal 12.3px/16px 'Liberation Sans',sans-serif;color:#000;white-space:nowrap;letter-spacing:0.241px;">Propostas</span>
<div style="position:absolute;left:1067px;top:135px;width:100.5px;height:33px;box-sizing:border-box;border:1px solid #8a91a0;border-bottom:none;background:linear-gradient(#f1f1f1 0,#ececec 30%,#d5d5d5 32%,#dadada 70%,#e2e2e2 100%);"></div>
<svg style="position:absolute;left:1074px;top:138.5px" width="30" height="27" viewBox="0 0 30 27">
<defs><linearGradient id="pg1074" x1="0" x2="0" y1="0" y2="1"><stop offset="0" stop-color="#fff"/><stop offset=".75" stop-color="#f6f6f6"/><stop offset="1" stop-color="#d2d2d2"/></linearGradient></defs>
<path d="M1 4 L28.500 4 L28.500 24 Q28.500 26 26.500 26 L3 26 Q1 26 1 24 Z" fill="url(#pg1074)" stroke="#cfcfcf" stroke-width="1"/>
<path d="M0.500 2 Q0.500 0.500 2 0.500 L24 0.500 Q25.500 0.500 26.500 2 L28.500 5.500 L0.500 5.500 Z" fill="#44b016"/>
<path d="M2.500 2.800 H24" stroke="#dff6cc" stroke-width="1.800" stroke-dasharray="1.300 .9"/>
<path d="M0.500 5.700 H28.500" stroke="#2f8f0a" stroke-width=".7"/>
<g stroke="#c6c6c6" stroke-width="1"><path d="M5 8.500 H13" stroke="#dedede"/><path d="M3.500 11.500 H26"/><path d="M3.500 13.500 H20" stroke="#d8d8d8"/><path d="M3.500 16.500 H26"/><path d="M3.500 18.500 H11" stroke="#d8d8d8"/><path d="M3.500 21.500 H26"/></g>
</svg>
<span style="position:absolute;left:1108.70px;top:145px;line-height:16px;font:normal normal 12.3px/16px 'Liberation Sans',sans-serif;color:#000;white-space:nowrap;letter-spacing:0.296px;">Contratos</span>
<div style="position:absolute;left:305px;top:133px;width:101px;height:37px;box-sizing:border-box;border:1px solid #8a91a0;border-bottom:none;background:#fff;"></div>
<svg style="position:absolute;left:313.5px;top:136.5px" width="30" height="27" viewBox="0 0 30 27">
<defs><linearGradient id="pg313.5" x1="0" x2="0" y1="0" y2="1"><stop offset="0" stop-color="#fff"/><stop offset=".75" stop-color="#f6f6f6"/><stop offset="1" stop-color="#d2d2d2"/></linearGradient></defs>
<path d="M1 4 L28.500 4 L28.500 24 Q28.500 26 26.500 26 L3 26 Q1 26 1 24 Z" fill="url(#pg313.5)" stroke="#cfcfcf" stroke-width="1"/>
<path d="M0.500 2 Q0.500 0.500 2 0.500 L24 0.500 Q25.500 0.500 26.500 2 L28.500 5.500 L0.500 5.500 Z" fill="#44b016"/>
<path d="M2.500 2.800 H24" stroke="#dff6cc" stroke-width="1.800" stroke-dasharray="1.300 .9"/>
<path d="M0.500 5.700 H28.500" stroke="#2f8f0a" stroke-width=".7"/>
<g stroke="#c6c6c6" stroke-width="1"><path d="M5 8.500 H13" stroke="#dedede"/><path d="M3.500 11.500 H26"/><path d="M3.500 13.500 H20" stroke="#d8d8d8"/><path d="M3.500 16.500 H26"/><path d="M3.500 18.500 H11" stroke="#d8d8d8"/><path d="M3.500 21.500 H26"/></g>
</svg>
<span style="position:absolute;left:348.40px;top:143px;line-height:16px;font:normal normal 12.3px/16px 'Liberation Sans',sans-serif;color:#000;white-space:nowrap;letter-spacing:0.107px;">Licitação</span>
<div style="position:absolute;left:213px;top:172px;width:1057.5px;height:778px;box-sizing:border-box;border-left:2px solid #767676;border-top:2px solid #6e6e6e;border-right:3px solid #9d9d9d;border-bottom:3px solid #9d9d9d;background:#fff;"></div>
<div style="position:absolute;left:1137px;top:176px;width:129px;height:770px;box-sizing:border-box;border-right:1px solid #a0a0a0;border-bottom:1px solid #a0a0a0;"></div>
<div style="position:absolute;left:219px;top:178px;width:917px;height:732px;box-sizing:border-box;border:1px solid #8a91a0;background:#fff;"></div>
<span style="position:absolute;left:223.20px;top:190px;line-height:16px;font:normal normal 12px/16px 'Liberation Sans',sans-serif;color:#000;white-space:nowrap;letter-spacing:0.497px;">Número:</span>
<span style="position:absolute;left:350.50px;top:190px;line-height:16px;font:normal normal 12px/16px 'Liberation Sans',sans-serif;color:#000;white-space:nowrap;letter-spacing:0.273px;">Modalidade</span>
<span style="position:absolute;left:544.20px;top:190px;line-height:16px;font:normal normal 12px/16px 'Liberation Sans',sans-serif;color:#000;white-space:nowrap;letter-spacing:0.567px;">Processo</span>
<span style="position:absolute;left:671.20px;top:190px;line-height:16px;font:normal normal 12px/16px 'Liberation Sans',sans-serif;color:#000;white-space:nowrap;letter-spacing:0.209px;">Tipo de Objeto</span>
<div style="position:absolute;left:224px;top:208px;width:117.5px;height:22.6px;box-sizing:border-box;border:1px solid #dce3ec;border-top-color:#abadb3;border-radius:2px;background:#fff;"></div>
<span style="position:absolute;right:939.80px;top:211px;line-height:16px;font:normal normal 12px/16px 'Liberation Sans',sans-serif;color:#000;white-space:nowrap;letter-spacing:0.221px;">0013/2012</span>
<div style="position:absolute;left:351px;top:208px;width:188px;height:22.7px;box-sizing:border-box;border:1px solid #a9acb4;background:#fff;box-shadow:inset 0 0 0 1px #e9ebf0;"></div><div style="position:absolute;left:520px;top:210px;width:17px;height:18.7px;box-sizing:border-box;border:1px solid #6f6f6f;background:linear-gradient(#f4f4f4 0,#e9e9e9 50%,#d3d3d3 100%);box-shadow:inset 0 0 0 1px #fff;"></div><svg style="position:absolute;left:524.5px;top:217.35px" width="8" height="5"><path d="M0 0 L8 0 L4 4.5 Z" fill="#000"/></svg><span style="position:absolute;left:355.00px;top:212px;line-height:16px;font:normal normal 12px/16px 'Liberation Sans',sans-serif;color:#000;white-space:nowrap;letter-spacing:-0.307px;">CONVITE</span>
<div style="position:absolute;left:546px;top:208px;width:120.5px;height:22.6px;box-sizing:border-box;border:1px solid #dce3ec;border-top-color:#abadb3;border-radius:2px;background:#fff;"></div>
<span style="position:absolute;right:621.00px;top:211px;line-height:16px;font:normal normal 12px/16px 'Liberation Sans',sans-serif;color:#000;white-space:nowrap;letter-spacing:0.116px;">00000031</span>
<div style="position:absolute;left:672px;top:208px;width:258.5px;height:22.7px;box-sizing:border-box;border:1px solid #a9acb4;background:#fff;box-shadow:inset 0 0 0 1px #e9ebf0;"></div><div style="position:absolute;left:911.5px;top:210px;width:17px;height:18.7px;box-sizing:border-box;border:1px solid #6f6f6f;background:linear-gradient(#f4f4f4 0,#e9e9e9 50%,#d3d3d3 100%);box-shadow:inset 0 0 0 1px #fff;"></div><svg style="position:absolute;left:916px;top:217.35px" width="8" height="5"><path d="M0 0 L8 0 L4 4.5 Z" fill="#000"/></svg><span style="position:absolute;left:675.70px;top:212px;line-height:16px;font:normal normal 12px/16px 'Liberation Sans',sans-serif;color:#000;white-space:nowrap;letter-spacing:-0.124px;">COMPRA E SERVIÇOS</span>
<span style="position:absolute;left:223.20px;top:237px;line-height:16px;font:normal normal 12px/16px 'Liberation Sans',sans-serif;color:#000;white-space:nowrap;letter-spacing:0.039px;">Atividade do Fornecedor:</span>
<div style="position:absolute;left:224px;top:259px;width:316.5px;height:23px;box-sizing:border-box;border:1px solid #a9acb4;background:#fff;box-shadow:inset 0 0 0 1px #e9ebf0;"></div><div style="position:absolute;left:521.5px;top:261px;width:17px;height:19px;box-sizing:border-box;border:1px solid #6f6f6f;background:linear-gradient(#f4f4f4 0,#e9e9e9 50%,#d3d3d3 100%);box-shadow:inset 0 0 0 1px #fff;"></div><svg style="position:absolute;left:526px;top:268.5px" width="8" height="5"><path d="M0 0 L8 0 L4 4.5 Z" fill="#000"/></svg><span style="position:absolute;left:227.20px;top:263px;line-height:16px;font:normal normal 12px/16px 'Liberation Sans',sans-serif;color:#000;white-space:nowrap;">CONSTRUÇÃO</span>
<div style="position:absolute;left:540.8px;top:259px;width:20px;height:20.5px;box-sizing:border-box;border:1px solid #858585;border-radius:3px;background:linear-gradient(#f0f0f0 0,#e9e9e9 48%,#dcdcdc 52%,#d2d2d2 100%);box-shadow:inset 0 0 0 1px #fbfbfb;"></div><svg style="position:absolute;left:540.8px;top:259px" width="20" height="21" viewBox="0 0 20 21">
<rect x="1.900" y="9.300" width="2.300" height="7.600" fill="#000"/><rect x="1.900" y="10" width="1.600" height="6.200" fill="#00f0ff"/>
<path d="M3.900 9.600 H6 L7 8.400 H9.500 L10.400 9.900 L10.700 10.300 H14.300 L15.100 11.200 L14.300 12.100 H11.400 V13 H10.600 V14 H9.900 V15.100 H9.100 V16.400 H5 L3.900 15.500 Z" fill="#fbf43a" stroke="#000" stroke-width="1" stroke-linejoin="round"/>
<path d="M7.400 10.400 H9.800 M8.600 12.300 H10.800 M8.300 14 H10" stroke="#000" stroke-width=".9"/>
<path d="M5.500 11 H6.300 M5.500 13 H6.300 M7 12 H7.800 M6.300 14.600 H7.100 M10.500 11.200 H13.500" stroke="#fff" stroke-width=".7" stroke-dasharray=".8 .8"/>
<g fill="#000"><rect x="15.300" y="4" width="2.900" height="1.800"/><rect x="16.200" y="7.200" width="1.900" height="1.700"/><rect x="16.200" y="13.200" width="1.900" height="1.700"/><rect x="15.300" y="16.200" width="2.900" height="1.800"/></g>
<rect x="16" y="10" width="2.300" height="2.100" fill="#f00"/></svg>
<div style="position:absolute;left:223px;top:287px;width:911px;height:1px;background:#939393;"></div>
<span style="position:absolute;left:223.20px;top:298px;line-height:16px;font:normal normal 12px/16px 'Liberation Sans',sans-serif;color:#000;white-space:nowrap;letter-spacing:0.394px;">Edital</span>
<span style="position:absolute;left:352.20px;top:298px;line-height:16px;font:normal normal 12px/16px 'Liberation Sans',sans-serif;color:#000;white-space:nowrap;letter-spacing:0.138px;">Abertura</span>
<span style="position:absolute;left:525.70px;top:298px;line-height:16px;font:normal normal 12px/16px 'Liberation Sans',sans-serif;color:#000;white-space:nowrap;letter-spacing:0.445px;">Homologação</span>
<span style="position:absolute;left:652.20px;top:298px;line-height:16px;font:normal normal 12px/16px 'Liberation Sans',sans-serif;color:#000;white-space:nowrap;letter-spacing:0.261px;">Adjudicação</span>
<span style="position:absolute;left:779.20px;top:298px;line-height:16px;font:normal normal 12px/16px 'Liberation Sans',sans-serif;color:#000;white-space:nowrap;letter-spacing:0.231px;">Tipo de Jugamento</span>
<div style="position:absolute;left:224px;top:314px;width:120.5px;height:22.7px;box-sizing:border-box;border:1px solid #dce3ec;border-top-color:#abadb3;border-radius:2px;background:#fff;"></div>
<span style="position:absolute;left:226.20px;top:317px;line-height:16px;font:normal normal 12px/16px 'Liberation Sans',sans-serif;color:#000;white-space:nowrap;letter-spacing:0.326px;">23/08/2012</span>
<div style="position:absolute;left:322px;top:315.8px;width:21px;height:19.5px;box-sizing:border-box;background:#f0f0f0;border-top:1px solid #fff;border-left:1px solid #fff;border-right:2px solid #6e6e6e;border-bottom:2px solid #6e6e6e;box-shadow:inset -1px -1px 0 #b4b4b4;"></div><svg style="position:absolute;left:326.5px;top:318.3px" width="13" height="13" viewBox="0 0 13 13">
<rect x="1.500" y="1.500" width="11" height="11" fill="#8c8c8c"/><rect x=".5" y=".5" width="11" height="11" fill="#fff"/>
<path d="M.5 .9 H11" stroke="#000" stroke-width="1.300"/><path d="M.8 11.200 H11.200 V1.500" stroke="#00008a" stroke-width="1.100" fill="none"/>
<text x="5.600" y="9.600" font-family="Liberation Sans,sans-serif" font-weight="bold" font-size="9" text-anchor="middle" fill="#000" textLength="8.600" lengthAdjust="spacingAndGlyphs">15</text></svg>
<div style="position:absolute;left:353px;top:314px;width:96px;height:22.7px;box-sizing:border-box;border:1px solid #dce3ec;border-top-color:#abadb3;border-radius:2px;background:#fff;"></div>
<span style="position:absolute;left:355.70px;top:317px;line-height:16px;font:normal normal 12px/16px 'Liberation Sans',sans-serif;color:#000;white-space:nowrap;letter-spacing:0.326px;">30/08/2012</span>
<div style="position:absolute;left:427px;top:315.8px;width:21px;height:19.5px;box-sizing:border-box;background:#f0f0f0;border-top:1px solid #fff;border-left:1px solid #fff;border-right:2px solid #6e6e6e;border-bottom:2px solid #6e6e6e;box-shadow:inset -1px -1px 0 #b4b4b4;"></div><svg style="position:absolute;left:431.5px;top:318.3px" width="13" height="13" viewBox="0 0 13 13">
<rect x="1.500" y="1.500" width="11" height="11" fill="#8c8c8c"/><rect x=".5" y=".5" width="11" height="11" fill="#fff"/>
<path d="M.5 .9 H11" stroke="#000" stroke-width="1.300"/><path d="M.8 11.200 H11.200 V1.500" stroke="#00008a" stroke-width="1.100" fill="none"/>
<text x="5.600" y="9.600" font-family="Liberation Sans,sans-serif" font-weight="bold" font-size="9" text-anchor="middle" fill="#000" textLength="8.600" lengthAdjust="spacingAndGlyphs">15</text></svg>
<div style="position:absolute;left:448.5px;top:314px;width:73.5px;height:22.7px;box-sizing:border-box;border:1px solid #dce3ec;border-top-color:#abadb3;border-radius:2px;background:#fff;"></div>
<span style="position:absolute;left:450.20px;top:317px;line-height:16px;font:normal normal 12px/16px 'Liberation Sans',sans-serif;color:#000;white-space:nowrap;letter-spacing:0.183px;">00:00:00</span>
<div style="position:absolute;left:504px;top:316.5px;width:15.5px;height:9px;box-sizing:border-box;border:1px solid #b4bac4;border-radius:2px 2px 0 0;background:linear-gradient(#fbfbfc,#e4e8ee);"></div>
<div style="position:absolute;left:504px;top:325.5px;width:15.5px;height:9px;box-sizing:border-box;border:1px solid #b4bac4;border-radius:0 0 2px 2px;background:linear-gradient(#fbfbfc,#e4e8ee);"></div>
<svg style="position:absolute;left:508.500px;top:319px" width="7" height="13" viewBox="0 0 7 13"><path d="M0.500 3.500 L3.500 0.500 L6.500 3.500 Z M0.500 9.500 L6.500 9.500 L3.500 12.500 Z" fill="#4b6ea8"/></svg>
<div style="position:absolute;left:526.5px;top:314px;width:120px;height:22.7px;box-sizing:border-box;border:1px solid #dce3ec;border-top-color:#abadb3;border-radius:2px;background:#fff;"></div>
<span style="position:absolute;left:528.70px;top:317px;line-height:16px;font:normal normal 12px/16px 'Liberation Sans',sans-serif;color:#000;white-space:nowrap;letter-spacing:0.326px;">30/08/2012</span>
<div style="position:absolute;left:624px;top:315.8px;width:21px;height:19.5px;box-sizing:border-box;background:#f0f0f0;border-top:1px solid #fff;border-left:1px solid #fff;border-right:2px solid #6e6e6e;border-bottom:2px solid #6e6e6e;box-shadow:inset -1px -1px 0 #b4b4b4;"></div><svg style="position:absolute;left:628.5px;top:318.3px" width="13" height="13" viewBox="0 0 13 13">
<rect x="1.500" y="1.500" width="11" height="11" fill="#8c8c8c"/><rect x=".5" y=".5" width="11" height="11" fill="#fff"/>
<path d="M.5 .9 H11" stroke="#000" stroke-width="1.300"/><path d="M.8 11.200 H11.200 V1.500" stroke="#00008a" stroke-width="1.100" fill="none"/>
<text x="5.600" y="9.600" font-family="Liberation Sans,sans-serif" font-weight="bold" font-size="9" text-anchor="middle" fill="#000" textLength="8.600" lengthAdjust="spacingAndGlyphs">15</text></svg>
<div style="position:absolute;left:653px;top:314px;width:120px;height:22.7px;box-sizing:border-box;border:1px solid #dce3ec;border-top-color:#abadb3;border-radius:2px;background:#fff;"></div>
<span style="position:absolute;left:655.70px;top:317px;line-height:16px;font:normal normal 12px/16px 'Liberation Sans',sans-serif;color:#000;white-space:nowrap;letter-spacing:0.326px;">30/08/2012</span>
<div style="position:absolute;left:750.5px;top:315.8px;width:21px;height:19.5px;box-sizing:border-box;background:#f0f0f0;border-top:1px solid #fff;border-left:1px solid #fff;border-right:2px solid #6e6e6e;border-bottom:2px solid #6e6e6e;box-shadow:inset -1px -1px 0 #b4b4b4;"></div><svg style="position:absolute;left:755px;top:318.3px" width="13" height="13" viewBox="0 0 13 13">
<rect x="1.500" y="1.500" width="11" height="11" fill="#8c8c8c"/><rect x=".5" y=".5" width="11" height="11" fill="#fff"/>
<path d="M.5 .9 H11" stroke="#000" stroke-width="1.300"/><path d="M.8 11.200 H11.200 V1.500" stroke="#00008a" stroke-width="1.100" fill="none"/>
<text x="5.600" y="9.600" font-family="Liberation Sans,sans-serif" font-weight="bold" font-size="9" text-anchor="middle" fill="#000" textLength="8.600" lengthAdjust="spacingAndGlyphs">15</text></svg>
<div style="position:absolute;left:779.5px;top:314.2px;width:273px;height:22.3px;box-sizing:border-box;border:1px solid #a9acb4;background:#fff;box-shadow:inset 0 0 0 1px #e9ebf0;"></div><div style="position:absolute;left:1033.5px;top:316.2px;width:17px;height:18.3px;box-sizing:border-box;border:1px solid #6f6f6f;background:linear-gradient(#f4f4f4 0,#e9e9e9 50%,#d3d3d3 100%);box-shadow:inset 0 0 0 1px #fff;"></div><svg style="position:absolute;left:1038px;top:323.35px" width="8" height="5"><path d="M0 0 L8 0 L4 4.5 Z" fill="#000"/></svg><span style="position:absolute;left:783.20px;top:317px;line-height:16px;font:normal normal 12px/16px 'Liberation Sans',sans-serif;color:#000;white-space:nowrap;letter-spacing:-0.098px;">POR LOTE</span>
<div style="position:absolute;left:223px;top:342px;width:911px;height:1px;background:#939393;"></div>
<div style="position:absolute;left:223px;top:351px;width:910px;height:286px;box-sizing:border-box;border:1px solid #dce3ec;border-radius:4px;"></div><div style="position:absolute;left:229.8px;top:348px;width:40px;height:7px;background:#fff;"></div><span style="position:absolute;left:231.00px;top:343px;line-height:16px;font:normal normal 12px/16px 'Liberation Sans',sans-serif;color:#000;white-space:nowrap;letter-spacing:0.328px;">Objeto</span>
<div style="position:absolute;left:225px;top:360.5px;width:906.5px;height:225px;box-sizing:border-box;border:1px solid #dce3ec;border-top-color:#c4cad4;border-radius:3px;background:#fff;"></div>
<span style="position:absolute;left:230.20px;top:363px;line-height:16px;font:normal normal 12px/16px 'Liberation Sans',sans-serif;color:#000;white-space:nowrap;letter-spacing:0.206px;">Contratação dos serviços técnicos especializados no desenvolvimento e manutenção de sistema de patrimônio e digitalização a serem utilizados pelas</span>
<span style="position:absolute;left:230.20px;top:378px;line-height:16px;font:normal normal 12px/16px 'Liberation Sans',sans-serif;color:#000;white-space:nowrap;letter-spacing:0.176px;">secretarias deste Prefeitura.</span>
<div style="position:absolute;left:225px;top:613px;width:906.5px;height:22px;box-sizing:border-box;border:1px solid #dce3ec;border-top-color:#abadb3;border-radius:2px;background:#fff;"></div>
<span style="position:absolute;left:227.80px;top:616px;line-height:16px;font:normal normal 12px/16px 'Liberation Sans',sans-serif;color:#000;white-space:nowrap;letter-spacing:0.193px;">Contratação dos serviços técnicos especializados no desenvolvimento e manutenção de sistema de patrimônio e digitalização.</span>
<div style="position:absolute;left:224px;top:647px;width:400px;height:32.5px;box-sizing:border-box;border:1px solid #dce3ec;border-radius:4px;"></div><div style="position:absolute;left:229.8px;top:644px;width:67.8px;height:7px;background:#fff;"></div><span style="position:absolute;left:231.00px;top:639px;line-height:16px;font:normal normal 12px/16px 'Liberation Sans',sans-serif;color:#000;white-space:nowrap;letter-spacing:0.426px;">Pagamento</span>
<div style="position:absolute;left:227px;top:654.3px;width:364px;height:22.3px;box-sizing:border-box;border:1px solid #a9acb4;background:#fff;box-shadow:inset 0 0 0 1px #e9ebf0;"></div><div style="position:absolute;left:572px;top:656.3px;width:17px;height:18.3px;box-sizing:border-box;border:1px solid #6f6f6f;background:linear-gradient(#f4f4f4 0,#e9e9e9 50%,#d3d3d3 100%);box-shadow:inset 0 0 0 1px #fff;"></div><svg style="position:absolute;left:576.5px;top:663.45px" width="8" height="5"><path d="M0 0 L8 0 L4 4.5 Z" fill="#000"/></svg><span style="position:absolute;left:231.50px;top:658px;line-height:16px;font:normal normal 12px/16px 'Liberation Sans',sans-serif;color:#000;white-space:nowrap;letter-spacing:0.145px;">Após a execução dos serviços</span>
<div style="position:absolute;left:591.6px;top:655.2px;width:20.2px;height:20.5px;box-sizing:border-box;border:1px solid #858585;border-radius:3px;background:linear-gradient(#f0f0f0 0,#e9e9e9 48%,#dcdcdc 52%,#d2d2d2 100%);box-shadow:inset 0 0 0 1px #fbfbfb;"></div><svg style="position:absolute;left:591.6px;top:655.2px" width="20" height="21" viewBox="0 0 20 21">
<rect x="1.900" y="9.300" width="2.300" height="7.600" fill="#000"/><rect x="1.900" y="10" width="1.600" height="6.200" fill="#00f0ff"/>
<path d="M3.900 9.600 H6 L7 8.400 H9.500 L10.400 9.900 L10.700 10.300 H14.300 L15.100 11.200 L14.300 12.100 H11.400 V13 H10.600 V14 H9.900 V15.100 H9.100 V16.400 H5 L3.900 15.500 Z" fill="#fbf43a" stroke="#000" stroke-width="1" stroke-linejoin="round"/>
<path d="M7.400 10.400 H9.800 M8.600 12.300 H10.800 M8.300 14 H10" stroke="#000" stroke-width=".9"/>
<path d="M5.500 11 H6.300 M5.500 13 H6.300 M7 12 H7.800 M6.300 14.600 H7.100 M10.500 11.200 H13.500" stroke="#fff" stroke-width=".7" stroke-dasharray=".8 .8"/>
<g fill="#000"><rect x="15.300" y="4" width="2.900" height="1.800"/><rect x="16.200" y="7.200" width="1.900" height="1.700"/><rect x="16.200" y="13.200" width="1.900" height="1.700"/><rect x="15.300" y="16.200" width="2.900" height="1.800"/></g>
<rect x="16" y="10" width="2.300" height="2.100" fill="#f00"/></svg>
<div style="position:absolute;left:728.5px;top:647px;width:404.5px;height:32.5px;box-sizing:border-box;border:1px solid #dce3ec;border-radius:4px;"></div><div style="position:absolute;left:734.5px;top:644px;width:66px;height:7px;background:#fff;"></div><span style="position:absolute;left:735.70px;top:639px;line-height:16px;font:normal normal 12px/16px 'Liberation Sans',sans-serif;color:#000;white-space:nowrap;letter-spacing:-0.037px;">Autorização</span>
<div style="position:absolute;left:737px;top:654.3px;width:371px;height:22.3px;box-sizing:border-box;border:1px solid #a9acb4;background:#fff;box-shadow:inset 0 0 0 1px #e9ebf0;"></div><div style="position:absolute;left:1089px;top:656.3px;width:17px;height:18.3px;box-sizing:border-box;border:1px solid #6f6f6f;background:linear-gradient(#f4f4f4 0,#e9e9e9 50%,#d3d3d3 100%);box-shadow:inset 0 0 0 1px #fff;"></div><svg style="position:absolute;left:1093.5px;top:663.45px" width="8" height="5"><path d="M0 0 L8 0 L4 4.5 Z" fill="#000"/></svg><span style="position:absolute;left:740.80px;top:658px;line-height:16px;font:normal normal 12px/16px 'Liberation Sans',sans-serif;color:#000;white-space:nowrap;letter-spacing:0.133px;">Ordem de serviço</span>
<div style="position:absolute;left:1108.6px;top:655.2px;width:20.2px;height:20.5px;box-sizing:border-box;border:1px solid #858585;border-radius:3px;background:linear-gradient(#f0f0f0 0,#e9e9e9 48%,#dcdcdc 52%,#d2d2d2 100%);box-shadow:inset 0 0 0 1px #fbfbfb;"></div><svg style="position:absolute;left:1108.6px;top:655.2px" width="20" height="21" viewBox="0 0 20 21">
<rect x="1.900" y="9.300" width="2.300" height="7.600" fill="#000"/><rect x="1.900" y="10" width="1.600" height="6.200" fill="#00f0ff"/>
<path d="M3.900 9.600 H6 L7 8.400 H9.500 L10.400 9.900 L10.700 10.300 H14.300 L15.100 11.200 L14.300 12.100 H11.400 V13 H10.600 V14 H9.900 V15.100 H9.100 V16.400 H5 L3.900 15.500 Z" fill="#fbf43a" stroke="#000" stroke-width="1" stroke-linejoin="round"/>
<path d="M7.400 10.400 H9.800 M8.600 12.300 H10.800 M8.300 14 H10" stroke="#000" stroke-width=".9"/>
<path d="M5.500 11 H6.300 M5.500 13 H6.300 M7 12 H7.800 M6.300 14.600 H7.100 M10.500 11.200 H13.500" stroke="#fff" stroke-width=".7" stroke-dasharray=".8 .8"/>
<g fill="#000"><rect x="15.300" y="4" width="2.900" height="1.800"/><rect x="16.200" y="7.200" width="1.900" height="1.700"/><rect x="16.200" y="13.200" width="1.900" height="1.700"/><rect x="15.300" y="16.200" width="2.900" height="1.800"/></g>
<rect x="16" y="10" width="2.300" height="2.100" fill="#f00"/></svg>
<div style="position:absolute;left:1133px;top:182px;width:1px;height:160px;background:#a3a3a3;"></div>
<div style="position:absolute;left:1133px;top:638px;width:1px;height:44px;background:#a3a3a3;"></div>
<div style="position:absolute;left:221px;top:681px;width:913px;height:1px;background:#a3a3a3;"></div>
<div style="position:absolute;left:223px;top:704px;width:908px;height:183px;box-sizing:border-box;border:1px solid #8c919c;background:#fff;"></div>
<div style="position:absolute;left:401px;top:685px;width:55.5px;height:19px;box-sizing:border-box;border:1px solid #8c919c;border-bottom:none;background:linear-gradient(#f2f2f2 0,#ebebeb 48%,#dddddd 52%,#d5d5d5 100%);"></div>
<span style="position:absolute;left:404.90px;top:686px;line-height:16px;font:normal normal 12px/16px 'Liberation Sans',sans-serif;color:#000;white-space:nowrap;letter-spacing:0.099px;">Dotação</span>
<div style="position:absolute;left:457.5px;top:685px;width:109px;height:19px;box-sizing:border-box;border:1px solid #8c919c;border-bottom:none;background:linear-gradient(#f2f2f2 0,#ebebeb 48%,#dddddd 52%,#d5d5d5 100%);"></div>
<span style="position:absolute;left:461.40px;top:686px;line-height:16px;font:normal normal 12px/16px 'Liberation Sans',sans-serif;color:#000;white-space:nowrap;letter-spacing:0.241px;">Fonte de Recurso</span>
<div style="position:absolute;left:567.5px;top:685px;width:67.5px;height:19px;box-sizing:border-box;border:1px solid #8c919c;border-bottom:none;background:linear-gradient(#f2f2f2 0,#ebebeb 48%,#dddddd 52%,#d5d5d5 100%);"></div>
<span style="position:absolute;left:572.40px;top:686px;line-height:16px;font:normal normal 12px/16px 'Liberation Sans',sans-serif;color:#000;white-space:nowrap;letter-spacing:0.734px;">Comissão</span>
<div style="position:absolute;left:223px;top:681.5px;width:178.5px;height:24px;box-sizing:border-box;border:1px solid #8c919c;border-bottom:none;background:#fff;"></div>
<span style="position:absolute;left:229.80px;top:685px;line-height:16px;font:normal normal 12px/16px 'Liberation Sans',sans-serif;color:#000;white-space:nowrap;letter-spacing:0.344px;">Informação Complementares</span>
<div style="position:absolute;left:228px;top:716.2px;width:900.5px;height:59.3px;box-sizing:border-box;border:1px solid #dce3ec;border-radius:4px;"></div><div style="position:absolute;left:233px;top:713.2px;width:44px;height:7px;background:#fff;"></div><span style="position:absolute;left:234.20px;top:708px;line-height:16px;font:normal normal 12px/16px 'Liberation Sans',sans-serif;color:#000;white-space:nowrap;letter-spacing:0.164px;">Serviço</span>
<div style="position:absolute;left:1127px;top:725px;width:1px;height:50px;background:#a8a8a8;"></div>
<div style="position:absolute;left:230px;top:774px;width:898px;height:1px;background:#a0a0a0;"></div>
<div style="position:absolute;left:230.5px;top:733px;width:258.5px;height:36.5px;box-sizing:border-box;border:1px solid #dce3ec;border-radius:4px;"></div><div style="position:absolute;left:236px;top:730px;width:143px;height:7px;background:#fff;"></div><span style="position:absolute;left:237.20px;top:726px;line-height:16px;font:normal normal 12px/16px 'Liberation Sans',sans-serif;color:#000;white-space:nowrap;letter-spacing:0.269px;">Entrega das mercadorias</span>
<div style="position:absolute;left:238px;top:744.5px;width:49.5px;height:22.5px;box-sizing:border-box;border:1px solid #dce3ec;border-top-color:#abadb3;border-radius:2px;background:#fff;"></div><span style="position:absolute;left:242.20px;top:748px;line-height:16px;font:normal normal 12px/16px 'Liberation Sans',sans-serif;color:#000;white-space:nowrap;">1</span><svg style="position:absolute;left:271.5px;top:747px" width="13" height="18" viewBox="0 0 13 18">
<rect x=".5" y=".5" width="11" height="8" rx="2" fill="#f4f4f4" stroke="#606060"/><rect x=".5" y="9" width="11" height="8" rx="2" fill="#f4f4f4" stroke="#606060"/>
<path d="M2.500 6.500 L6 2.500 L9.500 6.500 Z M2.500 11 L9.500 11 L6 15 Z" fill="#000"/></svg>
<div style="position:absolute;left:289.8px;top:744.5px;width:180px;height:22px;box-sizing:border-box;border:1px solid #707070;border-radius:3px;background:linear-gradient(#f2f2f2 0,#ebebeb 48%,#dddddd 52%,#cfcfcf 100%);box-shadow:inset 0 0 0 1px #fbfbfb;"></div><span style="position:absolute;left:294.00px;top:748px;line-height:16px;font:normal normal 12px/16px 'Liberation Sans',sans-serif;color:#000;white-space:nowrap;letter-spacing:0.419px;">Semana</span><svg style="position:absolute;left:457.8px;top:754px" width="8" height="5"><path d="M0 0 L8 0 L4 4.5 Z" fill="#000"/></svg>
<div style="position:absolute;left:491.5px;top:733px;width:257.5px;height:36.5px;box-sizing:border-box;border:1px solid #dce3ec;border-radius:4px;"></div><div style="position:absolute;left:495.8px;top:730px;width:106.4px;height:7px;background:#fff;"></div><span style="position:absolute;left:497.00px;top:726px;line-height:16px;font:normal normal 12px/16px 'Liberation Sans',sans-serif;color:#000;white-space:nowrap;letter-spacing:0.149px;">Início dos Serviços</span>
<div style="position:absolute;left:498px;top:744.5px;width:49.5px;height:22.5px;box-sizing:border-box;border:1px solid #dce3ec;border-top-color:#abadb3;border-radius:2px;background:#fff;"></div><span style="position:absolute;left:502.20px;top:748px;line-height:16px;font:normal normal 12px/16px 'Liberation Sans',sans-serif;color:#000;white-space:nowrap;">1</span><svg style="position:absolute;left:531.5px;top:747px" width="13" height="18" viewBox="0 0 13 18">
<rect x=".5" y=".5" width="11" height="8" rx="2" fill="#f4f4f4" stroke="#606060"/><rect x=".5" y="9" width="11" height="8" rx="2" fill="#f4f4f4" stroke="#606060"/>
<path d="M2.500 6.500 L6 2.500 L9.500 6.500 Z M2.500 11 L9.500 11 L6 15 Z" fill="#000"/></svg>
<div style="position:absolute;left:550.2px;top:744.5px;width:179.3px;height:22px;box-sizing:border-box;border:1px solid #707070;border-radius:3px;background:linear-gradient(#f2f2f2 0,#ebebeb 48%,#dddddd 52%,#cfcfcf 100%);box-shadow:inset 0 0 0 1px #fbfbfb;"></div><span style="position:absolute;left:554.40px;top:748px;line-height:16px;font:normal normal 12px/16px 'Liberation Sans',sans-serif;color:#000;white-space:nowrap;letter-spacing:0.242px;">Dia</span><svg style="position:absolute;left:717.5px;top:754px" width="8" height="5"><path d="M0 0 L8 0 L4 4.5 Z" fill="#000"/></svg>
<div style="position:absolute;left:749.5px;top:733px;width:260.5px;height:36.5px;box-sizing:border-box;border:1px solid #dce3ec;border-radius:4px;"></div><div style="position:absolute;left:756.5px;top:730px;width:137px;height:7px;background:#fff;"></div><span style="position:absolute;left:757.70px;top:726px;line-height:16px;font:normal normal 12px/16px 'Liberation Sans',sans-serif;color:#000;white-space:nowrap;letter-spacing:0.251px;">Conclusão dos Serviços</span>
<div style="position:absolute;left:758px;top:744.5px;width:49.5px;height:22.5px;box-sizing:border-box;border:1px solid #dce3ec;border-top-color:#abadb3;border-radius:2px;background:#fff;"></div><span style="position:absolute;left:762.20px;top:748px;line-height:16px;font:normal normal 12px/16px 'Liberation Sans',sans-serif;color:#000;white-space:nowrap;">1</span><svg style="position:absolute;left:791.5px;top:747px" width="13" height="18" viewBox="0 0 13 18">
<rect x=".5" y=".5" width="11" height="8" rx="2" fill="#f4f4f4" stroke="#606060"/><rect x=".5" y="9" width="11" height="8" rx="2" fill="#f4f4f4" stroke="#606060"/>
<path d="M2.500 6.500 L6 2.500 L9.500 6.500 Z M2.500 11 L9.500 11 L6 15 Z" fill="#000"/></svg>
<div style="position:absolute;left:810px;top:744.5px;width:179.5px;height:22px;box-sizing:border-box;border:1px solid #707070;border-radius:3px;background:linear-gradient(#f2f2f2 0,#ebebeb 48%,#dddddd 52%,#cfcfcf 100%);box-shadow:inset 0 0 0 1px #fbfbfb;"></div><span style="position:absolute;left:814.20px;top:748px;line-height:16px;font:normal normal 12px/16px 'Liberation Sans',sans-serif;color:#000;white-space:nowrap;letter-spacing:0.012px;">Ate o final do Exercício</span><svg style="position:absolute;left:977.5px;top:754px" width="8" height="5"><path d="M0 0 L8 0 L4 4.5 Z" fill="#000"/></svg>
<div style="position:absolute;left:228px;top:786.5px;width:164.5px;height:36px;box-sizing:border-box;border:1px solid #dce3ec;border-radius:4px;"></div><div style="position:absolute;left:233.5px;top:783.5px;width:82.8px;height:7px;background:#fff;"></div><span style="position:absolute;left:234.70px;top:779px;line-height:16px;font:normal normal 12px/16px 'Liberation Sans',sans-serif;color:#000;white-space:nowrap;letter-spacing:0.369px;">Pessoa Física</span>
<svg style="position:absolute;left:235.5px;top:801.5px" width="13" height="13" viewBox="0 0 13 13"><defs><radialGradient id="rg242"><stop offset="0" stop-color="#fff"/><stop offset=".6" stop-color="#e8e8e8"/><stop offset="1" stop-color="#c8c8c8"/></radialGradient></defs><circle cx="6.500" cy="6.500" r="5.300" fill="url(#rg242)" stroke="#8e8f8f" stroke-width="1"/><circle cx="6.500" cy="6.500" r="2.900" fill="#2a6cb4"/><circle cx="5.600" cy="5.500" r="1.200" fill="#8ec8f0"/></svg>
<span style="position:absolute;left:251.20px;top:800px;line-height:16px;font:normal normal 12px/16px 'Liberation Sans',sans-serif;color:#000;white-space:nowrap;letter-spacing:0.914px;">Sim</span>
<svg style="position:absolute;left:312.5px;top:801.5px" width="13" height="13" viewBox="0 0 13 13"><defs><radialGradient id="rg319"><stop offset="0" stop-color="#fff"/><stop offset=".6" stop-color="#e8e8e8"/><stop offset="1" stop-color="#c8c8c8"/></radialGradient></defs><circle cx="6.500" cy="6.500" r="5.300" fill="url(#rg319)" stroke="#8e8f8f" stroke-width="1"/></svg>
<span style="position:absolute;left:328.20px;top:800px;line-height:16px;font:normal normal 12px/16px 'Liberation Sans',sans-serif;color:#000;white-space:nowrap;letter-spacing:0.992px;">Não</span>
<div style="position:absolute;left:393.5px;top:786.5px;width:164px;height:36px;box-sizing:border-box;border:1px solid #dce3ec;border-radius:4px;"></div><div style="position:absolute;left:399.5px;top:783.5px;width:50.5px;height:7px;background:#fff;"></div><span style="position:absolute;left:400.70px;top:779px;line-height:16px;font:normal normal 12px/16px 'Liberation Sans',sans-serif;color:#000;white-space:nowrap;letter-spacing:0.210px;">Contrato</span>
<svg style="position:absolute;left:400.5px;top:801.5px" width="13" height="13" viewBox="0 0 13 13"><defs><radialGradient id="rg407"><stop offset="0" stop-color="#fff"/><stop offset=".6" stop-color="#e8e8e8"/><stop offset="1" stop-color="#c8c8c8"/></radialGradient></defs><circle cx="6.500" cy="6.500" r="5.300" fill="url(#rg407)" stroke="#8e8f8f" stroke-width="1"/><circle cx="6.500" cy="6.500" r="2.900" fill="#2a6cb4"/><circle cx="5.600" cy="5.500" r="1.200" fill="#8ec8f0"/></svg>
<span style="position:absolute;left:416.70px;top:800px;line-height:16px;font:normal normal 12px/16px 'Liberation Sans',sans-serif;color:#000;white-space:nowrap;letter-spacing:0.914px;">Sim</span>
<svg style="position:absolute;left:477px;top:801.5px" width="13" height="13" viewBox="0 0 13 13"><defs><radialGradient id="rg483"><stop offset="0" stop-color="#fff"/><stop offset=".6" stop-color="#e8e8e8"/><stop offset="1" stop-color="#c8c8c8"/></radialGradient></defs><circle cx="6.500" cy="6.500" r="5.300" fill="url(#rg483)" stroke="#8e8f8f" stroke-width="1"/></svg>
<span style="position:absolute;left:492.70px;top:800px;line-height:16px;font:normal normal 12px/16px 'Liberation Sans',sans-serif;color:#000;white-space:nowrap;letter-spacing:0.992px;">Não</span>
<div style="position:absolute;left:559px;top:786.5px;width:163.5px;height:36px;box-sizing:border-box;border:1px solid #dce3ec;border-radius:4px;"></div><div style="position:absolute;left:564.5px;top:783.5px;width:81.7px;height:7px;background:#fff;"></div><span style="position:absolute;left:565.70px;top:779px;line-height:16px;font:normal normal 12px/16px 'Liberation Sans',sans-serif;color:#000;white-space:nowrap;letter-spacing:0.110px;">Valor do Edital</span>
<div style="position:absolute;left:582px;top:796.3px;width:139px;height:24.7px;box-sizing:border-box;border:1px solid #dce3ec;border-top-color:#abadb3;border-radius:2px;background:#fff;"></div>
<span style="position:absolute;right:566.00px;top:799px;line-height:16px;font:normal normal 12px/16px 'Liberation Sans',sans-serif;color:#000;white-space:nowrap;">R$ 0,00</span>
<div style="position:absolute;left:1138px;top:180px;width:121px;height:32.5px;box-sizing:border-box;border:1px solid #c6cad2;border-left:none;border-radius:0 3px 3px 0;background:#f4f4f4;"></div>
<span style="position:absolute;left:1190.60px;top:188px;line-height:18px;font:normal bold 14px/18px 'Liberation Sans',sans-serif;color:#a6a6a6;white-space:nowrap;letter-spacing:0.667px;"><u>N</u>ovo</span>
<div style="position:absolute;left:1138px;top:215px;width:121px;height:32.5px;box-sizing:border-box;border:1px solid #707070;border-left:none;border-radius:0 3px 3px 0;background:linear-gradient(#f3f3f3 0,#ececec 47%,#dedede 50%,#d0d0d0 100%);box-shadow:inset -1px 0 0 0 #fafafa,inset 0 1px 0 0 #fafafa,inset 0 -1px 0 0 #e6e6e6;"></div>
<svg style="position:absolute;left:1150.3px;top:216.5px" width="30" height="31" viewBox="0 0 30 31">
<path d="M8.500 5 L19.500 1.500 L21.500 8.500 L10.500 12 Z" fill="#c4d8fb" stroke="#5585ee" stroke-width="1.300" stroke-linejoin="round"/>
<path d="M9.500 6 L18.500 3.200 L19.300 6 L10.200 8.800 Z" fill="#e6effe"/>
<path d="M2.500 13.500 Q5 11 9.500 10.500 L12 10 L21.500 7.500 Q22.500 12 24 15 Q26.500 20 27 24 L9.500 30 Q5 22 2.500 13.500 Z" fill="#eef4ff" stroke="#4a7ae6" stroke-width="1.500" stroke-linejoin="round"/>
<path d="M13 22.500 L25.500 18.800 L26.800 23.800 L10.500 29.200 Z" fill="#8fb2f6" opacity=".85"/>
<path d="M3.500 14 Q6 22 10 29" fill="none" stroke="#9dbcf8" stroke-width="1.600"/>
<path d="M7 15.500 L15.500 13 M8.300 19 L17.500 16.300 M9.800 22.600 L19 19.800" stroke="#5b88ee" stroke-width="1.500" stroke-linecap="round"/>
<path d="M13.200 19 L14.800 13.300 L22.300 4.300 L26.800 7.800 L19.300 17 Z" fill="#f7b21a" stroke="#c47c0c" stroke-width=".7"/>
<path d="M16 12.500 L23.200 4.800" stroke="#ffe07a" stroke-width="1.500"/>
<path d="M18.500 15.800 L25.800 7.300" stroke="#e08a10" stroke-width="1.300"/>
<path d="M22.300 4.300 L24.300 2 Q27 0.300 28.800 2.600 Q30.200 4.800 28.600 6.300 L26.800 7.800 Z" fill="#f04a30"/>
<path d="M24.500 2.500 Q26.500 1.300 28 2.800" stroke="#ff9a80" stroke-width="1" fill="none"/>
<path d="M13.200 19 L14.100 15.800 L16.300 17.500 Z" fill="#1c1c1c"/>
</svg>
<span style="position:absolute;left:1185.30px;top:223px;line-height:18px;font:normal bold 14px/18px 'Liberation Sans',sans-serif;color:#000;white-space:nowrap;letter-spacing:0.210px;"><u>A</u>lterar</span>
<div style="position:absolute;left:1138px;top:250px;width:121px;height:32.5px;box-sizing:border-box;border:1px solid #c6cad2;border-left:none;border-radius:0 3px 3px 0;background:#f4f4f4;"></div>
<span style="position:absolute;left:1187.20px;top:258px;line-height:18px;font:normal bold 14px/18px 'Liberation Sans',sans-serif;color:#a6a6a6;white-space:nowrap;letter-spacing:0.753px;">A<u>p</u>agar</span>
<div style="position:absolute;left:1138px;top:285px;width:121px;height:32.5px;box-sizing:border-box;border:1px solid #c6cad2;border-left:none;border-radius:0 3px 3px 0;background:#f4f4f4;"></div>
<span style="position:absolute;left:1176.80px;top:293px;line-height:18px;font:normal bold 14px/18px 'Liberation Sans',sans-serif;color:#a6a6a6;white-space:nowrap;letter-spacing:0.353px;">Bloqueiar</span>
<div style="position:absolute;left:1138px;top:320px;width:121px;height:32.5px;box-sizing:border-box;border:1px solid #c6cad2;border-left:none;border-radius:0 3px 3px 0;background:#f4f4f4;"></div>
<span style="position:absolute;left:1163.60px;top:328px;line-height:18px;font:normal bold 14px/18px 'Liberation Sans',sans-serif;color:#a6a6a6;white-space:nowrap;letter-spacing:0.536px;">Desbloqueiar</span>
<div style="position:absolute;left:1138px;top:355px;width:121px;height:32.5px;box-sizing:border-box;border:1px solid #707070;border-left:none;border-radius:0 3px 3px 0;background:linear-gradient(#f3f3f3 0,#ececec 47%,#dedede 50%,#d0d0d0 100%);box-shadow:inset -1px 0 0 0 #fafafa,inset 0 1px 0 0 #fafafa,inset 0 -1px 0 0 #e6e6e6;"></div>
<svg style="position:absolute;left:1147px;top:356.5px" width="30" height="30" viewBox="0 0 30 30">
<path d="M0.500 1 L24 1 L26.500 3 L29 24.500 L6 29.500 L3.500 27.500 Z" fill="#4d4a86" stroke="#26244a" stroke-width="1"/>
<path d="M1 1.500 L4 27.500 L6 29 L28.500 24.300" fill="none" stroke="#1e1c3c" stroke-width="1.400"/>
<path d="M6.500 1.500 L23.500 1.500 L25.500 15.500 L8.500 17.500 Z" fill="#fdf9b4" stroke="#d9d48c" stroke-width=".6"/>
<path d="M9 6 L22 5.200 M9.300 9 L22.500 8 M9.700 12.300 L23 11.300" stroke="#c9c58a" stroke-width="1"/>
<path d="M9.500 20.500 L21 18.800 L22.300 25.300 L10.500 27.500 Z" fill="#c8c9d6" stroke="#8c8ca4" stroke-width=".7"/>
<path d="M11.500 21.500 L14 21.100 L14.800 26 L12.300 26.500 Z" fill="#3c3a6c"/>
<rect x="3" y="3" width="2.200" height="1.800" fill="#2a2850"/>
</svg>
<span style="position:absolute;left:1192.40px;top:363px;line-height:18px;font:normal bold 14px/18px 'Liberation Sans',sans-serif;color:#000;white-space:nowrap;letter-spacing:0.751px;"><u>S</u>alvar</span>
<div style="position:absolute;left:1138px;top:390px;width:121px;height:32.5px;box-sizing:border-box;border:1px solid #707070;border-left:none;border-radius:0 3px 3px 0;background:linear-gradient(#f3f3f3 0,#ececec 47%,#dedede 50%,#d0d0d0 100%);box-shadow:inset -1px 0 0 0 #fafafa,inset 0 1px 0 0 #fafafa,inset 0 -1px 0 0 #e6e6e6;"></div>
<svg style="position:absolute;left:1143.5px;top:391px" width="30" height="31" viewBox="0 0 30 31">
<path d="M8.500 5 L19.500 1.500 L21.500 8.500 L10.500 12 Z" fill="#c4d8fb" stroke="#5585ee" stroke-width="1.300" stroke-linejoin="round"/>
<path d="M9.500 6 L18.500 3.200 L19.300 6 L10.200 8.800 Z" fill="#e6effe"/>
<path d="M2.500 13.500 Q5 11 9.500 10.500 L12 10 L21.500 7.500 Q22.500 12 24 15 Q26.500 20 27 24 L9.500 30 Q5 22 2.500 13.500 Z" fill="#eef4ff" stroke="#4a7ae6" stroke-width="1.500" stroke-linejoin="round"/>
<path d="M13 22.500 L25.500 18.800 L26.800 23.800 L10.500 29.200 Z" fill="#8fb2f6" opacity=".85"/>
<path d="M3.500 14 Q6 22 10 29" fill="none" stroke="#9dbcf8" stroke-width="1.600"/>
<path d="M7 15.500 L15.500 13 M8.300 19 L17.500 16.300 M9.800 22.600 L19 19.800" stroke="#5b88ee" stroke-width="1.500" stroke-linecap="round"/>
<path d="M9.500 13.500 L14.500 8.500 L19 13 L24.500 7.500 L28.500 11 L23 16.500 L28 21.500 L23.500 25.500 L18.500 20.500 L13 26 L9 22.500 L14.500 17 Z" fill="#f2451c" stroke="#ffb48c" stroke-width=".8"/>
<path d="M11.500 13.500 L14.500 10.700 L19 15.200 L24.500 9.700 M16.500 17 L11 22.400" stroke="#ff8a52" stroke-width="1.400" fill="none"/>
<path d="M21 18.500 L26 23 M15.500 23 L13 25" stroke="#c42c0c" stroke-width="1.200" fill="none"/>
</svg>
<span style="position:absolute;left:1177.40px;top:398px;line-height:18px;font:normal bold 14px/18px 'Liberation Sans',sans-serif;color:#000;white-space:nowrap;letter-spacing:0.406px;"><u>C</u>ancelar</span>
<div style="position:absolute;left:1138px;top:425px;width:121px;height:32.5px;box-sizing:border-box;border:1px solid #c6cad2;border-left:none;border-radius:0 3px 3px 0;background:#f4f4f4;"></div>
<span style="position:absolute;left:1185.50px;top:433px;line-height:18px;font:normal bold 14px/18px 'Liberation Sans',sans-serif;color:#a6a6a6;white-space:nowrap;letter-spacing:0.183px;"><u>L</u>impar</span>
<div style="position:absolute;left:1138px;top:460px;width:121px;height:32.5px;box-sizing:border-box;border:1px solid #707070;border-left:none;border-radius:0 3px 3px 0;background:linear-gradient(#f3f3f3 0,#ececec 47%,#dedede 50%,#d0d0d0 100%);box-shadow:inset -1px 0 0 0 #fafafa,inset 0 1px 0 0 #fafafa,inset 0 -1px 0 0 #e6e6e6;"></div>
<svg style="position:absolute;left:1145px;top:462px" width="28" height="29" viewBox="0 0 28 29">
<path d="M4 1 L13.500 0.500 L16 11 L7.500 12.500 Z" fill="#b8d0fa" stroke="#7ea2ea" stroke-width=".8"/>
<path d="M1 14.500 L9 10.500 L20 9.500 L26 13.500 L26 22 L10 27.500 L1 22.500 Z" fill="#e9e9e9" stroke="#8a8a8a" stroke-width=".9"/>
<path d="M1 14.500 L10 18.500 L26 13.500 M10 18.500 L10 27.500" stroke="#9a9a9a" stroke-width=".9" fill="none"/>
<path d="M6 14 L11 11.500 L20 11 L22.500 13 L12 16.500 Z" fill="#bcbcbc"/>
<path d="M3 21.500 L9 24.500 L24 19.500" stroke="#777" stroke-width="1.600" fill="none"/>
<rect x="22.500" y="16.500" width="2.500" height="2" fill="#38d028"/>
<circle cx="23" cy="4.500" r="4.200" fill="#111"/><path d="M20.800 4.500 L22.500 6.300 L25.300 2.800" stroke="#fff" stroke-width="1.300" fill="none"/>
</svg>
<span style="position:absolute;left:1185.50px;top:468px;line-height:18px;font:normal bold 14px/18px 'Liberation Sans',sans-serif;color:#000;white-space:nowrap;letter-spacing:-0.145px;"><u>I</u>mprimir</span>
<div style="position:absolute;left:1138px;top:495px;width:121px;height:32.5px;box-sizing:border-box;border:1px solid #707070;border-left:none;border-radius:0 3px 3px 0;background:linear-gradient(#f3f3f3 0,#ececec 47%,#dedede 50%,#d0d0d0 100%);box-shadow:inset -1px 0 0 0 #fafafa,inset 0 1px 0 0 #fafafa,inset 0 -1px 0 0 #e6e6e6;"></div>
<svg style="position:absolute;left:1147.5px;top:498px" width="27" height="26" viewBox="0 0 27 26">
<path d="M1.500 4.500 L13 1 L15 17 L4 20 Z" fill="#58a8f4" stroke="#8ea8e8" stroke-width="1.200"/>
<path d="M3 6 L11.500 3.200 L12.500 12 L4.500 15 Z" fill="#8cc8fb"/>
<ellipse cx="7" cy="21.500" rx="5.500" ry="2.500" fill="#d9e2f6" stroke="#a8b8e0" stroke-width=".7"/>
<ellipse cx="19" cy="9.500" rx="5.600" ry="6.300" fill="#e8731a"/>
<path d="M13.300 8 Q14 2.500 19 2.500 Q24.500 2.500 24.800 8 Q22 5.500 19 5.800 Q16 5.500 13.300 8 Z" fill="#262020"/>
<path d="M10 25.500 Q10 18 15.500 16.500 L19 22 L22.500 16.500 Q27 18 27 25.500 Z" fill="#dd6a12"/>
<path d="M16.500 16.300 L19 22.500 L21.500 16.300 Z" fill="#f4f4f4"/>
</svg>
<span style="position:absolute;left:1179.70px;top:503px;line-height:18px;font:normal bold 14px/18px 'Liberation Sans',sans-serif;color:#000;white-space:nowrap;letter-spacing:0.258px;"><u>R</u>egistro</span>
<div style="position:absolute;left:1138px;top:530px;width:121px;height:32.5px;box-sizing:border-box;border:1px solid #707070;border-left:none;border-radius:0 3px 3px 0;background:linear-gradient(#f3f3f3 0,#ececec 47%,#dedede 50%,#d0d0d0 100%);box-shadow:inset -1px 0 0 0 #fafafa,inset 0 1px 0 0 #fafafa,inset 0 -1px 0 0 #e6e6e6;"></div>
<svg style="position:absolute;left:1156.5px;top:534.5px" width="24" height="24" viewBox="0 0 24 24">
<circle cx="12" cy="12" r="11.300" fill="#2a6ba2"/>
<path d="M8.200 7.300 A6.300 6.300 0 1 0 15.800 7.300" fill="none" stroke="#fff" stroke-width="2.300" stroke-linecap="round"/>
<path d="M12 4.500 V11.500" stroke="#fff" stroke-width="2.300" stroke-linecap="round"/></svg>
<span style="position:absolute;left:1202.70px;top:538px;line-height:18px;font:normal bold 14px/18px 'Liberation Sans',sans-serif;color:#000;white-space:nowrap;letter-spacing:0.677px;">Sai<u>r</u></span>
<div style="position:absolute;left:221px;top:889px;width:913px;height:1px;background:#b9bdc7;"></div>
<div style="position:absolute;left:225px;top:890px;width:909px;height:17px;background:#f0eeee;"></div>
<div style="position:absolute;left:293px;top:890px;width:1px;height:18px;background:#d2d2d2;"></div>
<div style="position:absolute;left:363.5px;top:890px;width:1px;height:18px;background:#d2d2d2;"></div>
<div style="position:absolute;left:563.5px;top:890px;width:1px;height:18px;background:#d2d2d2;"></div>
<span style="position:absolute;left:772.20px;top:890px;line-height:15px;font:normal normal 11.7px/15px 'Liberation Sans',sans-serif;color:#000;white-space:nowrap;letter-spacing:0.036px;">Alterando Registro Corrente?</span>
<div style="position:absolute;left:1023px;top:890px;width:26px;height:18.5px;box-sizing:border-box;border:1px solid #b8bcc4;border-radius:3px;background:#f4f4f4;"></div><svg style="position:absolute;left:1029.5px;top:893.5px" width="14" height="11" viewBox="0 0 14 11"><path d="M4.500 1.500 H2.500 V9.500" fill="none" stroke="#b8b8b8"/><path d="M11.500 1.500 L5 5.500 L11.500 9.500 Z" fill="none" stroke="#b8b8b8" stroke-width=".9"/></svg>
<div style="position:absolute;left:1050.5px;top:890px;width:26px;height:18.5px;box-sizing:border-box;border:1px solid #b8bcc4;border-radius:3px;background:#f4f4f4;"></div><svg style="position:absolute;left:1057px;top:893.5px" width="14" height="11" viewBox="0 0 14 11"><path d="M11 1.500 L3 5.500 L11 9.500 Z" fill="none" stroke="#b8b8b8" stroke-width=".9"/></svg>
<div style="position:absolute;left:1078px;top:890px;width:26px;height:18.5px;box-sizing:border-box;border:1px solid #707070;border-radius:3px;background:linear-gradient(#f3f3f3 0,#ececec 47%,#dedede 50%,#d0d0d0 100%);box-shadow:inset 0 0 0 1px #fafafa;"></div><svg style="position:absolute;left:1084.5px;top:893.5px" width="14" height="11" viewBox="0 0 14 11"><path d="M3 1 L11 5.500 L3 10 Z" fill="#000"/></svg>
<div style="position:absolute;left:1106px;top:890px;width:26px;height:18.5px;box-sizing:border-box;border:1px solid #707070;border-radius:3px;background:linear-gradient(#f3f3f3 0,#ececec 47%,#dedede 50%,#d0d0d0 100%);box-shadow:inset 0 0 0 1px #fafafa;"></div><svg style="position:absolute;left:1112.5px;top:893.5px" width="14" height="11" viewBox="0 0 14 11"><path d="M2 1 L9.500 5.500 L2 10 Z" fill="#000"/><rect x="10" y="1" width="1.800" height="9" fill="#000"/></svg>
<div style="position:absolute;left:337px;top:910px;width:799px;height:1px;background:#b4b4b8;"></div>
<div style="position:absolute;left:337px;top:911px;width:102px;height:33px;box-sizing:border-box;border:1px solid #8a91a0;background:linear-gradient(#f3f3f3 0,#ececec 28%,#d8d8d8 30%,#d6d6d6 100%);"></div>
<div style="position:absolute;left:219px;top:910px;width:119px;height:36px;box-sizing:border-box;border-left:1px solid #8a91a0;border-right:1px solid #8a91a0;background:#fff;"></div>
<svg style="position:absolute;left:225.5px;top:913px" width="30" height="31" viewBox="0 0 30 31">
<path d="M8.500 5 L19.500 1.500 L21.500 8.500 L10.500 12 Z" fill="#c4d8fb" stroke="#5585ee" stroke-width="1.300" stroke-linejoin="round"/>
<path d="M9.500 6 L18.500 3.200 L19.300 6 L10.200 8.800 Z" fill="#e6effe"/>
<path d="M2.500 13.500 Q5 11 9.500 10.500 L12 10 L21.500 7.500 Q22.500 12 24 15 Q26.500 20 27 24 L9.500 30 Q5 22 2.500 13.500 Z" fill="#eef4ff" stroke="#4a7ae6" stroke-width="1.500" stroke-linejoin="round"/>
<path d="M13 22.500 L25.500 18.800 L26.800 23.800 L10.500 29.200 Z" fill="#8fb2f6" opacity=".85"/>
<path d="M3.500 14 Q6 22 10 29" fill="none" stroke="#9dbcf8" stroke-width="1.600"/>
<path d="M7 15.500 L15.500 13 M8.300 19 L17.500 16.300 M9.800 22.600 L19 19.800" stroke="#5b88ee" stroke-width="1.500" stroke-linecap="round"/>
<path d="M13.200 19 L14.800 13.300 L22.300 4.300 L26.800 7.800 L19.300 17 Z" fill="#f7b21a" stroke="#c47c0c" stroke-width=".7"/>
<path d="M16 12.500 L23.200 4.800" stroke="#ffe07a" stroke-width="1.500"/>
<path d="M18.500 15.800 L25.800 7.300" stroke="#e08a10" stroke-width="1.300"/>
<path d="M22.300 4.300 L24.300 2 Q27 0.300 28.800 2.600 Q30.200 4.800 28.600 6.300 L26.800 7.800 Z" fill="#f04a30"/>
<path d="M24.500 2.500 Q26.500 1.300 28 2.800" stroke="#ff9a80" stroke-width="1" fill="none"/>
<path d="M13.200 19 L14.100 15.800 L16.300 17.500 Z" fill="#1c1c1c"/>
</svg>
<span style="position:absolute;left:266.60px;top:909px;line-height:16px;font:normal normal 12px/16px 'Liberation Sans',sans-serif;color:#000;white-space:nowrap;letter-spacing:0.073px;">Manutenção</span>
<span style="position:absolute;left:379.80px;top:911px;line-height:16px;font:normal normal 12px/16px 'Liberation Sans',sans-serif;color:#000;white-space:nowrap;letter-spacing:0.491px;">Pesquisar</span>
<svg style="position:absolute;left:340.500px;top:911px" width="31" height="32" viewBox="0 0 30 31">
<path d="M8.500 5 L19.500 1.500 L21.500 8.500 L10.500 12 Z" fill="#c4d8fb" stroke="#5585ee" stroke-width="1.300" stroke-linejoin="round"/>
<path d="M9.500 6 L18.500 3.200 L19.300 6 L10.200 8.800 Z" fill="#e6effe"/>
<path d="M2.500 13.500 Q5 11 9.500 10.500 L12 10 L21.500 7.500 Q22.500 12 24 15 Q26.500 20 27 24 L9.500 30 Q5 22 2.500 13.500 Z" fill="#eef4ff" stroke="#4a7ae6" stroke-width="1.500" stroke-linejoin="round"/>
<path d="M13 22.500 L25.500 18.800 L26.800 23.800 L10.500 29.200 Z" fill="#8fb2f6" opacity=".85"/>
<path d="M3.500 14 Q6 22 10 29" fill="none" stroke="#9dbcf8" stroke-width="1.600"/>
<path d="M7 15.500 L15.500 13 M8.300 19 L17.500 16.300 M9.800 22.600 L19 19.800" stroke="#5b88ee" stroke-width="1.500" stroke-linecap="round"/>
<circle cx="15" cy="19.500" r="6.200" fill="#bfe2fb" stroke="#f6c400" stroke-width="2.400"/>
<circle cx="15" cy="19.500" r="7.300" fill="none" stroke="#d99800" stroke-width=".6"/>
<path d="M11.500 20.500 Q12 16 16.500 15.500" stroke="#fff" stroke-width="1.400" fill="none" opacity=".8"/>
<path d="M20 24.200 L27.500 28.300" stroke="#b5650e" stroke-width="4" stroke-linecap="round"/>
<path d="M20.500 23.800 L23 25.200" stroke="#f8c820" stroke-width="3.600" stroke-linecap="round"/>
<path d="M24.500 26 L27.500 27.700" stroke="#e89a20" stroke-width="1.600" stroke-linecap="round"/></svg>
</body></html>
